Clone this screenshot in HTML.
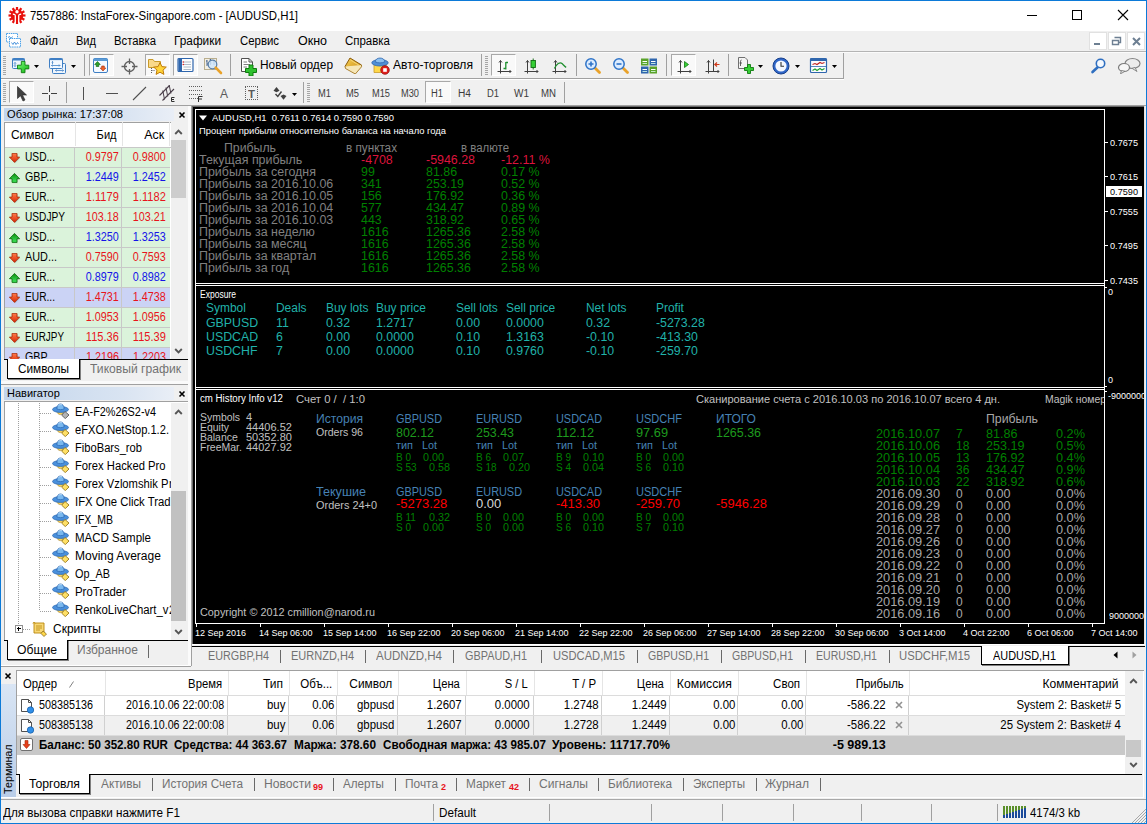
<!DOCTYPE html>
<html><head><meta charset="utf-8"><title>MT4</title><style>
html,body{margin:0;padding:0;width:1147px;height:824px;overflow:hidden;background:#f0f0f0}
body{position:relative;font-family:"Liberation Sans",sans-serif;font-size:12px;line-height:1}
div,span,svg{position:absolute;display:block}
span{white-space:pre;line-height:1}
</style></head><body>
<div style="left:0px;top:0px;width:1147px;height:31px;background:#fff;"></div>
<div style="left:0px;top:31px;width:1147px;height:793px;background:#f0f0f0;"></div>
<svg style="left:8px;top:7px" width="18" height="17" viewBox="0 0 18 17"><rect x="7.900" y="0" width="2.200" height="3.200" transform="rotate(0 9 8.500)" fill="#e8100c"/><rect x="7.900" y="0" width="2.200" height="3.200" transform="rotate(30 9 8.500)" fill="#e8100c"/><rect x="7.900" y="0" width="2.200" height="3.200" transform="rotate(60 9 8.500)" fill="#e8100c"/><rect x="7.900" y="0" width="2.200" height="3.200" transform="rotate(90 9 8.500)" fill="#e8100c"/><rect x="7.900" y="0" width="2.200" height="3.200" transform="rotate(120 9 8.500)" fill="#e8100c"/><rect x="7.900" y="0" width="2.200" height="3.200" transform="rotate(150 9 8.500)" fill="#e8100c"/><rect x="7.900" y="0" width="2.200" height="3.200" transform="rotate(180 9 8.500)" fill="#e8100c"/><rect x="7.900" y="0" width="2.200" height="3.200" transform="rotate(210 9 8.500)" fill="#e8100c"/><rect x="7.900" y="0" width="2.200" height="3.200" transform="rotate(240 9 8.500)" fill="#e8100c"/><rect x="7.900" y="0" width="2.200" height="3.200" transform="rotate(270 9 8.500)" fill="#e8100c"/><rect x="7.900" y="0" width="2.200" height="3.200" transform="rotate(300 9 8.500)" fill="#e8100c"/><rect x="7.900" y="0" width="2.200" height="3.200" transform="rotate(330 9 8.500)" fill="#e8100c"/><circle cx="9" cy="8.500" r="6.300" fill="#e8100c"/>
<circle cx="9" cy="4.700" r="1.700" fill="#fff"/>
<path d="M4.800 7.400C6.200 7 7.300 7.600 7.300 9V15.500M13.200 7.400C11.800 7 10.700 7.600 10.700 9V15.500" stroke="#fff" stroke-width="1.300" fill="none"/>
<rect x="8.100" y="13" width="1.800" height="4" fill="#e8100c"/></svg>
<span style="top:10px;font-size:12px;color:#000;left:30px;transform:scaleX(0.9521);transform-origin:0 0;">7557886: InstaForex-Singapore.com - [AUDUSD,H1]</span>
<div style="left:1027px;top:15px;width:10px;height:1px;background:#000;"></div>
<div style="left:1072px;top:10px;width:10px;height:10px;background:transparent;border:1px solid #000;box-sizing:border-box"></div>
<svg style="left:1117px;top:9px" width="12" height="12" viewBox="0 0 12 12"><path d="M1 1L11 11M11 1L1 11" stroke="#000" stroke-width="1.1" fill="none"/></svg>
<svg style="left:5px;top:32px" width="17" height="16" viewBox="0 0 17 16"><rect x="1.500" y="1.500" width="11" height="8.500" fill="#fff" stroke="#4aa0e8" stroke-dasharray="1.500 0.700"/><path d="M3 5.500L4.500 4.500L6 6.500L7.500 4.500" stroke="#3b8ad8" fill="none" stroke-width="0.900"/>
<rect x="4.500" y="6.500" width="11" height="8.500" fill="#fff" stroke="#4aa0e8" stroke-dasharray="1.500 0.700"/><path d="M6.500 10.500L8 12.500L9.500 10L11 12.500L12.500 10.500L13.500 12" stroke="#3b8ad8" fill="none" stroke-width="0.900"/></svg>
<span style="top:35px;font-size:12px;color:#000;left:30px;transform:scaleX(0.9487);transform-origin:0 0;">Файл</span>
<span style="top:35px;font-size:12px;color:#000;left:76px;transform:scaleX(0.9209);transform-origin:0 0;">Вид</span>
<span style="top:35px;font-size:12px;color:#000;left:114px;transform:scaleX(0.9415);transform-origin:0 0;">Вставка</span>
<span style="top:35px;font-size:12px;color:#000;left:174px;transform:scaleX(0.9853);transform-origin:0 0;">Графики</span>
<span style="top:35px;font-size:12px;color:#000;left:240px;transform:scaleX(0.9490);transform-origin:0 0;">Сервис</span>
<span style="top:35px;font-size:12px;color:#000;left:298px;transform:scaleX(1.0398);transform-origin:0 0;">Окно</span>
<span style="top:35px;font-size:12px;color:#000;left:345px;transform:scaleX(0.9559);transform-origin:0 0;">Справка</span>
<div style="left:1089px;top:32px;width:18px;height:18px;background:#fff;border:1px solid #e1e1e1;box-sizing:border-box"></div>
<div style="left:1108px;top:32px;width:18px;height:18px;background:#fff;border:1px solid #e1e1e1;box-sizing:border-box"></div>
<div style="left:1127px;top:32px;width:18px;height:18px;background:#fff;border:1px solid #e1e1e1;box-sizing:border-box"></div>
<div style="left:1094px;top:43px;width:6px;height:2px;background:#6d7f92;"></div>
<svg style="left:1111px;top:36px" width="11" height="10" viewBox="0 0 11 10"><path d="M3.5 1.5H9.5V6.5H8M1.5 4.5H7.5V8.5H1.5Z" stroke="#6d7f92" stroke-width="1.4" fill="none"/></svg>
<svg style="left:1132px;top:37px" width="9" height="9" viewBox="0 0 9 9"><path d="M1 1L8 8M8 1L1 8" stroke="#6d7f92" stroke-width="2" fill="none"/></svg>
<div style="left:1px;top:51px;width:1145px;height:1px;background:#b4b4b4;"></div>
<div style="left:1px;top:52px;width:1145px;height:1px;background:#fbfbfb;"></div>
<div style="left:1px;top:78px;width:843px;height:1px;background:#a0a0a0;"></div>
<div style="left:843px;top:53px;width:1px;height:26px;background:#a0a0a0;"></div>
<div style="left:1px;top:79px;width:843px;height:1px;background:#fff;"></div>
<div style="left:1px;top:105px;width:1145px;height:1px;background:#a0a0a0;"></div>
<div style="left:3px;top:56px;width:3px;height:1px;background:#a6a6a6;"></div>
<div style="left:3px;top:58px;width:3px;height:1px;background:#a6a6a6;"></div>
<div style="left:3px;top:60px;width:3px;height:1px;background:#a6a6a6;"></div>
<div style="left:3px;top:62px;width:3px;height:1px;background:#a6a6a6;"></div>
<div style="left:3px;top:64px;width:3px;height:1px;background:#a6a6a6;"></div>
<div style="left:3px;top:66px;width:3px;height:1px;background:#a6a6a6;"></div>
<div style="left:3px;top:68px;width:3px;height:1px;background:#a6a6a6;"></div>
<div style="left:3px;top:70px;width:3px;height:1px;background:#a6a6a6;"></div>
<div style="left:3px;top:72px;width:3px;height:1px;background:#a6a6a6;"></div>
<div style="left:3px;top:74px;width:3px;height:1px;background:#a6a6a6;"></div>
<div style="left:485px;top:56px;width:3px;height:1px;background:#a6a6a6;"></div>
<div style="left:485px;top:58px;width:3px;height:1px;background:#a6a6a6;"></div>
<div style="left:485px;top:60px;width:3px;height:1px;background:#a6a6a6;"></div>
<div style="left:485px;top:62px;width:3px;height:1px;background:#a6a6a6;"></div>
<div style="left:485px;top:64px;width:3px;height:1px;background:#a6a6a6;"></div>
<div style="left:485px;top:66px;width:3px;height:1px;background:#a6a6a6;"></div>
<div style="left:485px;top:68px;width:3px;height:1px;background:#a6a6a6;"></div>
<div style="left:485px;top:70px;width:3px;height:1px;background:#a6a6a6;"></div>
<div style="left:485px;top:72px;width:3px;height:1px;background:#a6a6a6;"></div>
<div style="left:485px;top:74px;width:3px;height:1px;background:#a6a6a6;"></div>
<div style="left:3px;top:83px;width:3px;height:1px;background:#a6a6a6;"></div>
<div style="left:3px;top:85px;width:3px;height:1px;background:#a6a6a6;"></div>
<div style="left:3px;top:87px;width:3px;height:1px;background:#a6a6a6;"></div>
<div style="left:3px;top:89px;width:3px;height:1px;background:#a6a6a6;"></div>
<div style="left:3px;top:91px;width:3px;height:1px;background:#a6a6a6;"></div>
<div style="left:3px;top:93px;width:3px;height:1px;background:#a6a6a6;"></div>
<div style="left:3px;top:95px;width:3px;height:1px;background:#a6a6a6;"></div>
<div style="left:3px;top:97px;width:3px;height:1px;background:#a6a6a6;"></div>
<div style="left:3px;top:99px;width:3px;height:1px;background:#a6a6a6;"></div>
<div style="left:3px;top:101px;width:3px;height:1px;background:#a6a6a6;"></div>
<div style="left:307px;top:83px;width:3px;height:1px;background:#a6a6a6;"></div>
<div style="left:307px;top:85px;width:3px;height:1px;background:#a6a6a6;"></div>
<div style="left:307px;top:87px;width:3px;height:1px;background:#a6a6a6;"></div>
<div style="left:307px;top:89px;width:3px;height:1px;background:#a6a6a6;"></div>
<div style="left:307px;top:91px;width:3px;height:1px;background:#a6a6a6;"></div>
<div style="left:307px;top:93px;width:3px;height:1px;background:#a6a6a6;"></div>
<div style="left:307px;top:95px;width:3px;height:1px;background:#a6a6a6;"></div>
<div style="left:307px;top:97px;width:3px;height:1px;background:#a6a6a6;"></div>
<div style="left:307px;top:99px;width:3px;height:1px;background:#a6a6a6;"></div>
<div style="left:307px;top:101px;width:3px;height:1px;background:#a6a6a6;"></div>
<div style="left:84px;top:54px;width:1px;height:22px;background:#a0a0a0;"></div>
<div style="left:230px;top:54px;width:1px;height:22px;background:#a0a0a0;"></div>
<div style="left:481px;top:54px;width:1px;height:22px;background:#a0a0a0;"></div>
<div style="left:576px;top:54px;width:1px;height:22px;background:#a0a0a0;"></div>
<div style="left:666px;top:54px;width:1px;height:22px;background:#a0a0a0;"></div>
<div style="left:728px;top:54px;width:1px;height:22px;background:#a0a0a0;"></div>
<div style="left:66px;top:82px;width:1px;height:21px;background:#a0a0a0;"></div>
<div style="left:303px;top:82px;width:1px;height:21px;background:#a0a0a0;"></div>
<div style="left:564px;top:82px;width:1px;height:21px;background:#a0a0a0;"></div>
<div style="left:89px;top:54px;width:25px;height:22px;background:#f9f9f9;border:1px solid #fff;border-top-color:#a8a8a8;border-left-color:#a8a8a8;box-sizing:border-box"></div>
<div style="left:145px;top:54px;width:25px;height:22px;background:#f9f9f9;border:1px solid #fff;border-top-color:#a8a8a8;border-left-color:#a8a8a8;box-sizing:border-box"></div>
<div style="left:173px;top:54px;width:25px;height:22px;background:#f9f9f9;border:1px solid #fff;border-top-color:#a8a8a8;border-left-color:#a8a8a8;box-sizing:border-box"></div>
<div style="left:491px;top:54px;width:25px;height:22px;background:#f9f9f9;border:1px solid #fff;border-top-color:#a8a8a8;border-left-color:#a8a8a8;box-sizing:border-box"></div>
<div style="left:671px;top:54px;width:25px;height:22px;background:#f9f9f9;border:1px solid #fff;border-top-color:#a8a8a8;border-left-color:#a8a8a8;box-sizing:border-box"></div>
<div style="left:9px;top:81px;width:25px;height:22px;background:#f9f9f9;border:1px solid #fff;border-top-color:#a8a8a8;border-left-color:#a8a8a8;box-sizing:border-box"></div>
<div style="left:425px;top:81px;width:26px;height:22px;background:#f9f9f9;border:1px solid #fff;border-top-color:#a8a8a8;border-left-color:#a8a8a8;box-sizing:border-box"></div>
<span style="top:59px;font-size:12px;color:#000;left:260px;transform:scaleX(0.9890);transform-origin:0 0;">Новый ордер</span>
<span style="top:59px;font-size:12px;color:#000;left:393px;transform:scaleX(1.0095);transform-origin:0 0;">Авто-торговля</span>
<span style="top:89px;font-size:10px;color:#3c3c3c;left:318px;transform:scaleX(0.9348);transform-origin:0 0;">M1</span>
<span style="top:89px;font-size:10px;color:#3c3c3c;left:346px;transform:scaleX(0.9348);transform-origin:0 0;">M5</span>
<span style="top:89px;font-size:10px;color:#3c3c3c;left:372px;transform:scaleX(0.9253);transform-origin:0 0;">M15</span>
<span style="top:89px;font-size:10px;color:#3c3c3c;left:401px;transform:scaleX(0.9253);transform-origin:0 0;">M30</span>
<span style="top:89px;font-size:10px;color:#3c3c3c;left:431px;transform:scaleX(0.9377);transform-origin:0 0;">H1</span>
<span style="top:89px;font-size:10px;color:#3c3c3c;left:458px;transform:scaleX(1.0159);transform-origin:0 0;">H4</span>
<span style="top:89px;font-size:10px;color:#3c3c3c;left:487px;transform:scaleX(0.9377);transform-origin:0 0;">D1</span>
<span style="top:89px;font-size:10px;color:#3c3c3c;left:514px;">W1</span>
<span style="top:89px;font-size:10px;color:#3c3c3c;left:541px;transform:scaleX(0.9639);transform-origin:0 0;">MN</span>
<svg style="left:11px;top:57px" width="19" height="18" viewBox="0 0 19 18"><rect x="1.5" y="1.5" width="12" height="10" rx="1" fill="#eef5fc" stroke="#3f7fc4"/><rect x="1.5" y="1.5" width="12" height="2" fill="#3f7fc4"/>
<path d="M4 5.5V9.5M3 6.5L4 5.5L5 6.5M3 8.5L4 9.5L5 8.5" stroke="#3f7fc4" fill="none" stroke-width="0.8"/>
<defs><linearGradient id="gp" x1="0" y1="0" x2="1" y2="1"><stop offset="0" stop-color="#7aff7a"/><stop offset="1" stop-color="#10b010"/></linearGradient></defs><path d="M10.300 4.400H14V8.200H17.800V11.900H14V15.700H10.300V11.900H6.500V8.200H10.300Z" fill="url(#gp)" stroke="#0f7a0f" stroke-width="0.900"/></svg>
<svg style="left:34px;top:65px" width="5" height="3" viewBox="0 0 5 3"><path d="M0 0H5L2.5 3Z" fill="#000"/></svg>
<svg style="left:48px;top:57px" width="19" height="18" viewBox="0 0 19 18"><rect x="4.500" y="6.500" width="13" height="10" rx="1" fill="#eef5fc" stroke="#3f7fc4"/>
<path d="M7.500 13.500H15.500M8.500 12.500L7.500 13.500L8.500 14.500M14.500 12.500L15.500 13.500L14.500 14.500" stroke="#3f7fc4" fill="none" stroke-width="0.800"/>
<rect x="1.500" y="1.500" width="13" height="10" rx="1" fill="#f4f9ff" stroke="#3f7fc4"/><rect x="1.500" y="1.500" width="13" height="1.600" fill="#3f7fc4"/>
<path d="M3.500 8.500H12M4.500 7.500L3.500 8.500L4.500 9.500M11 7.500L12 8.500L11 9.500M4.500 4.500V7M3.700 5.300L4.500 4.500L5.300 5.300" stroke="#3f7fc4" fill="none" stroke-width="0.800"/></svg>
<svg style="left:71px;top:65px" width="5" height="3" viewBox="0 0 5 3"><path d="M0 0H5L2.5 3Z" fill="#000"/></svg>
<svg style="left:92px;top:57px" width="17" height="17" viewBox="0 0 17 17"><rect x="1.5" y="1.5" width="14" height="14" rx="1.5" fill="#f4f9ff" stroke="#3f7fc4"/><rect x="1.5" y="1.5" width="14" height="2.5" fill="#5b9bd5"/>
<path d="M5.500 4.500L8.300 7.500H6.800V9.500H4.200V7.500H2.700Z" fill="#2aa02a" stroke="#0b5e0b" stroke-width="0.600"/><path d="M11 14L13.800 11H12.300V9H9.700V11H8.200Z" fill="#f0642a" stroke="#a02808" stroke-width="0.600"/></svg>
<svg style="left:121px;top:58px" width="17" height="17" viewBox="0 0 17 17"><circle cx="8.5" cy="8.5" r="5" fill="none" stroke="#606060" stroke-width="1.3"/><path d="M8.5 0.5V6M8.5 11V16.5M0.5 8.5H6M11 8.5H16.5" stroke="#606060" stroke-width="1.3"/></svg>
<svg style="left:147px;top:56px" width="20" height="19" viewBox="0 0 20 19"><path d="M1.5 3.5H6L7.5 5.5H13.5V11.5H1.5Z" fill="#f9d98a" stroke="#c89a2a"/><path d="M4.5 12V17" stroke="#606060" stroke-dasharray="1 1"/><path d="M4.5 14.5H8" stroke="#606060" stroke-dasharray="1 1"/>
<path d="M13 6.5L14.9 10.6L19.3 11.1L16 14.1L16.9 18.4L13 16.2L9.1 18.4L10 14.1L6.7 11.1L11.1 10.6Z" fill="#ffd43a" stroke="#c07c0a" stroke-width="1"/></svg>
<svg style="left:177px;top:57px" width="17" height="16" viewBox="0 0 17 16"><rect x="1" y="1.5" width="15" height="13" rx="1" fill="#fdfdfd" stroke="#2f66ad" stroke-width="1.2"/><rect x="1.5" y="2" width="3.5" height="12" fill="#2f66ad"/>
<path d="M6.5 5H14M6.5 7.5H14M6.5 10H14M6.5 12.5H14" stroke="#9ab" stroke-width="0.8"/><circle cx="6.3" cy="5" r="0.8" fill="#d22"/><circle cx="6.3" cy="7.5" r="0.8" fill="#d22"/></svg>
<svg style="left:203px;top:56px" width="20" height="20" viewBox="0 0 20 20"><rect x="1.5" y="2.5" width="12" height="11" fill="#f3efe3" stroke="#b9ae8e"/><path d="M4 4V10M3 5H4M4 8H5M7.5 3V9M6.5 4H7.5M7.5 7H8.5M11 4V9M10 5H11" stroke="#3a5a8a" stroke-width="0.9" fill="none"/>
<circle cx="9.5" cy="8.5" r="4.3" fill="#cfe6fb" fill-opacity="0.85" stroke="#5a7fa8" stroke-width="1.2"/><path d="M12.7 11.7L18 17" stroke="#e9a22a" stroke-width="2.6" stroke-linecap="round"/></svg>
<svg style="left:239px;top:57px" width="19" height="19" viewBox="0 0 19 19"><path d="M2.5 1.5H10L13.5 5V14.5H2.5Z" fill="#fff" stroke="#505050"/><path d="M10 1.5V5H13.5" fill="none" stroke="#505050"/><path d="M4.5 5H8M4.5 7.5H11M4.5 10H8" stroke="#707070" stroke-width="0.9"/>
<path d="M10 8H14V11.500H17.5V15.500H14V19H10V15.500H6.500V11.500H10Z" fill="#2fc12f" stroke="#0f7a0f" stroke-width="1"/></svg>
<svg style="left:344px;top:57px" width="19" height="17" viewBox="0 0 19 17"><defs><linearGradient id="bk" x1="0" y1="0" x2="1" y2="1"><stop offset="0" stop-color="#f7d25a"/><stop offset="1" stop-color="#c8860a"/></linearGradient></defs><path d="M6 1L17.500 8L11 15.500L1 9.500Z" fill="url(#bk)" stroke="#8a5a0a" stroke-width="1"/><path d="M1 9.500L1.5 11.500L11.300 17L17.5 9.800V8" fill="#f6e7b8" stroke="#9a6a0a" stroke-width="0.8"/><path d="M6.5 3L15 8.200" stroke="#f7d774" stroke-width="1"/></svg>
<svg style="left:371px;top:56px" width="19" height="19" viewBox="0 0 19 19"><path d="M3 8H15V16.500H3Z" fill="#ffd84a" stroke="#c89a2a" stroke-width="0.8"/><ellipse cx="9" cy="6.800" rx="8.200" ry="3.200" fill="#4f8fd6" stroke="#2f66ad" stroke-width="0.8"/><path d="M4.200 5.800C4.200 0.800 13.800 0.800 13.800 5.800C11 7.300 7 7.300 4.200 5.800Z" fill="#8cc0f0" stroke="#2f66ad" stroke-width="0.8"/>
<circle cx="14" cy="14" r="4.300" fill="#e0201c" stroke="#8a0a0a" stroke-width="0.7"/><rect x="12.200" y="12.200" width="3.600" height="3.600" fill="#fff"/></svg>
<svg style="left:495px;top:57px" width="18" height="18" viewBox="0 0 18 18"><path d="M5.500 3.500V16.500M2.500 14.500H16M4 5.500L5.500 3.500L7 5.500M14.500 13L16 14.500L14.500 16" stroke="#404040" stroke-width="1" fill="none"/><path d="M10.800 5V12.500M10.800 5.500H13M10.800 11.500H8.500" stroke="#1f8f2f" stroke-width="1.300" fill="none"/></svg>
<svg style="left:522px;top:57px" width="18" height="18" viewBox="0 0 18 18"><path d="M5.500 3.500V16.500M2.500 14.500H16M4 5.500L5.500 3.500L7 5.500M14.500 13L16 14.500L14.500 16" stroke="#404040" stroke-width="1" fill="none"/><path d="M11.200 1.500V12.500" stroke="#1f6f1f" stroke-width="1"/><rect x="9" y="3.500" width="4.400" height="7" fill="#35cf35" stroke="#0f6a0f" stroke-width="0.900"/></svg>
<svg style="left:550px;top:57px" width="18" height="18" viewBox="0 0 18 18"><path d="M5.500 3.500V16.500M2.500 14.500H16M4 5.500L5.500 3.500L7 5.500M14.500 13L16 14.500L14.500 16" stroke="#404040" stroke-width="1" fill="none"/><path d="M4.400 11.500C6.500 7 10 4.500 12 6.500C13.500 8 14.500 9.500 16.200 10.400" stroke="#1f8f2f" stroke-width="1.200" fill="none"/></svg>
<svg style="left:584px;top:57px" width="18" height="18" viewBox="0 0 18 18"><path d="M10.500 10.500L15.500 15.500" stroke="#e9a22a" stroke-width="2.800" stroke-linecap="round"/><circle cx="7" cy="7" r="5.200" fill="#dcecff" stroke="#2f74c8" stroke-width="1.500"/><path d="M4.500 7H9.500M7 4.500V9.500" stroke="#2f74c8" stroke-width="1.600"/></svg>
<svg style="left:612px;top:57px" width="18" height="18" viewBox="0 0 18 18"><path d="M10.500 10.500L15.500 15.500" stroke="#e9a22a" stroke-width="2.800" stroke-linecap="round"/><circle cx="7" cy="7" r="5.200" fill="#dcecff" stroke="#2f74c8" stroke-width="1.500"/><path d="M4.500 7H9.500" stroke="#2f74c8" stroke-width="1.600"/></svg>
<svg style="left:640px;top:57px" width="18" height="18" viewBox="0 0 18 18"><rect x="1" y="1.500" width="7.500" height="7" fill="#5aa22a"/><rect x="9.500" y="1.500" width="7.500" height="7" fill="#2f66ad"/><rect x="1" y="9.500" width="7.500" height="7" fill="#2f66ad"/><rect x="9.500" y="9.500" width="7.500" height="7" fill="#5aa22a"/>
<path d="M2.500 4.500H7M11 4.500H15.500M2.500 12.500H7M11 12.500H15.500" stroke="#fff" stroke-width="1"/><path d="M2.500 6.500H7M11 6.500H15.500M2.500 14.500H7M11 14.500H15.500" stroke="#dfe" stroke-width="0.8"/></svg>
<svg style="left:675px;top:57px" width="18" height="18" viewBox="0 0 18 18"><path d="M5.500 3.500V16.500M2.500 14.500H16M4 5.500L5.500 3.500L7 5.500M14.500 13L16 14.500L14.500 16" stroke="#404040" stroke-width="1" fill="none"/><path d="M9.500 4.500L13.500 7.500L9.500 10.500Z" fill="#35cf35" stroke="#0f7a0f" stroke-width="0.800"/></svg>
<svg style="left:703px;top:57px" width="18" height="18" viewBox="0 0 18 18"><path d="M5.500 3.500V16.500M2.500 14.500H16M4 5.500L5.500 3.500L7 5.500M14.500 13L16 14.500L14.500 16" stroke="#404040" stroke-width="1" fill="none"/><path d="M10.500 2.500V14" stroke="#404040" stroke-width="1"/><path d="M16.500 7.500H12M14 5.500L11.800 7.500L14 9.500" stroke="#d03a1a" stroke-width="1.200" fill="none"/></svg>
<svg style="left:737px;top:56px" width="19" height="19" viewBox="0 0 19 19"><path d="M1.500 1.500H8L10.500 4V12.500H1.500Z" fill="#f4f4f4" stroke="#707070"/><path d="M4.500 4C3.500 4 3.500 5 3.500 6V10M2.500 7H5" stroke="#505050" stroke-width="0.9" fill="none"/>
<path d="M10.500 8.500H13.500V11.500H16.500V14.500H13.500V17.500H10.500V14.500H7.500V11.500H10.500Z" fill="#35cf35" stroke="#0f7a0f" stroke-width="0.900"/></svg>
<svg style="left:758px;top:65px" width="5" height="3" viewBox="0 0 5 3"><path d="M0 0H5L2.5 3Z" fill="#000"/></svg>
<svg style="left:772px;top:57px" width="18" height="18" viewBox="0 0 18 18"><circle cx="9" cy="9" r="8" fill="#2f66c8" stroke="#173f8a" stroke-width="1"/><circle cx="9" cy="9" r="5.600" fill="#f4f8ff"/><path d="M9 5V9.300H12" stroke="#333" stroke-width="1.100" fill="none"/></svg>
<svg style="left:795px;top:65px" width="5" height="3" viewBox="0 0 5 3"><path d="M0 0H5L2.5 3Z" fill="#000"/></svg>
<svg style="left:809px;top:57px" width="19" height="17" viewBox="0 0 19 17"><rect x="1.500" y="1.500" width="16" height="14" rx="1" fill="#fbfdff" stroke="#2f66ad" stroke-width="1.200"/><rect x="1.500" y="1.500" width="16" height="2.500" fill="#2f66ad"/><path d="M2 9.500H17" stroke="#2f66ad" stroke-width="0.800"/>
<path d="M3.500 7.500L6 6.500L8 7.500L11 5.500L13 6.500L15.500 5.500" stroke="#c0201c" stroke-width="1.100" fill="none"/><path d="M3.500 13.500L6 12L8 13.500L11 11.500L13 13L15.500 11.500" stroke="#1f9f2f" stroke-width="1.100" fill="none"/></svg>
<svg style="left:832px;top:65px" width="5" height="3" viewBox="0 0 5 3"><path d="M0 0H5L2.5 3Z" fill="#000"/></svg>
<svg style="left:1090px;top:58px" width="16" height="16" viewBox="0 0 16 16"><path d="M8.500 8.500L2.500 14" stroke="#2f6fc0" stroke-width="2.600" stroke-linecap="round"/><circle cx="10.500" cy="5.500" r="4.200" fill="#f4f9ff" stroke="#2f6fc0" stroke-width="1.600"/></svg>
<svg style="left:1117px;top:57px" width="25" height="17" viewBox="0 0 25 17"><ellipse cx="15.500" cy="6.500" rx="7.500" ry="5" fill="#ececec" stroke="#858585" stroke-width="1.200"/><path d="M18 10.500L20 14.500L15 11.300Z" fill="#ececec" stroke="#858585" stroke-width="0.900"/>
<ellipse cx="7" cy="10.500" rx="5.500" ry="4" fill="#f6f6f6" stroke="#7a7a7a" stroke-width="1.200"/><path d="M4.500 13.500L3.500 16.800L8 14.300Z" fill="#f6f6f6" stroke="#7a7a7a" stroke-width="0.900"/></svg>
<svg style="left:16px;top:86px" width="12" height="16" viewBox="0 0 12 16"><path d="M1.500 0.500V12.500L4.500 9.800L7 15L9 14L6.500 9H10.500Z" fill="#404040" stroke="#202020" stroke-width="0.600"/></svg>
<svg style="left:42px;top:86px" width="15" height="15" viewBox="0 0 15 15"><path d="M7.500 0V6M7.500 9V15M0 7.500H6M9 7.500H15" stroke="#404040" stroke-width="1"/></svg>
<div style="left:83px;top:87px;width:1px;height:13px;background:#505050;"></div>
<div style="left:106px;top:93px;width:12px;height:1px;background:#505050;"></div>
<svg style="left:132px;top:86px" width="15" height="15" viewBox="0 0 15 15"><path d="M1 14L14 1" stroke="#505050" stroke-width="1.100"/></svg>
<svg style="left:158px;top:85px" width="20" height="18" viewBox="0 0 20 18"><path d="M1.500 10.500L11.500 0.500M4.500 15.500L16 4" stroke="#4a3f4a" stroke-width="1.100" fill="none"/><path d="M4.800 5.500L6.500 14.500M8 2.500L9.700 11.500M11.200 0L12.900 8.500" stroke="#4a3f4a" stroke-width="1" fill="none"/><path d="M16.500 12.500H13.500V16.500H16.500M13.500 14.500H16" stroke="#303030" stroke-width="1" fill="none"/></svg>
<div style="left:189px;top:86px;width:14px;height:1px;background:repeating-linear-gradient(90deg,#606060 0 1px,transparent 1px 2px);"></div>
<div style="left:189px;top:90px;width:14px;height:1px;background:repeating-linear-gradient(90deg,#606060 0 1px,transparent 1px 2px);"></div>
<div style="left:189px;top:94px;width:14px;height:1px;background:repeating-linear-gradient(90deg,#606060 0 1px,transparent 1px 2px);"></div>
<div style="left:189px;top:98px;width:9px;height:1px;background:repeating-linear-gradient(90deg,#606060 0 1px,transparent 1px 2px);"></div>
<svg style="left:198px;top:96px" width="5" height="6" viewBox="0 0 5 6"><path d="M0.500 6V0.500H4.500M0.500 3H4" stroke="#303030" stroke-width="1" fill="none"/></svg>
<span style="top:88px;font-size:12px;color:#5a5a5a;left:220px;">A</span>
<div style="left:245px;top:86px;width:13px;height:14px;background:transparent;border:1px dotted #606060;box-sizing:border-box"></div>
<span style="top:89px;font-size:11px;color:#5a5a5a;font-weight:bold;left:248px;transform:scaleX(1.0394);transform-origin:0 0;">T</span>
<svg style="left:271px;top:86px" width="18" height="15" viewBox="0 0 18 15"><path d="M2.500 4.700L5.500 1L8.500 4.700L5.500 6.200Z" fill="#404040"/><path d="M9.500 10L12.500 13.700L15.500 10L12.500 8.500Z" fill="#404040"/><path d="M4.500 8L6.800 10.500L10.500 5.500" stroke="#404040" stroke-width="1.400" fill="none"/></svg>
<svg style="left:292px;top:93px" width="5" height="3" viewBox="0 0 5 3"><path d="M0 0H5L2.5 3Z" fill="#000"/></svg>
<div style="left:1px;top:106px;width:187px;height:561px;background:#f0f0f0;"></div>
<div style="left:4px;top:108px;width:170px;height:13px;background:linear-gradient(90deg,#c2d5ec 0%,#d9e4f2 70%,#e9eef6 100%);"></div>
<span style="top:109px;font-size:11px;color:#000;left:7px;transform:scaleX(1.0084);transform-origin:0 0;">Обзор рынка: 17:37:08</span>
<svg style="left:178px;top:111px" width="8" height="8" viewBox="0 0 8 8"><path d="M1.5 1.5L6.5 6.5M6.5 1.5L1.5 6.5" stroke="#000" stroke-width="1.6"/></svg>
<div style="left:4px;top:123px;width:184px;height:236px;background:#fff;"></div>
<div style="left:4px;top:122px;width:1px;height:237px;background:#a0a0a0;"></div>
<div style="left:4px;top:122px;width:184px;height:1px;background:#a0a0a0;"></div>
<span style="top:129px;font-size:12px;color:#000;left:11px;transform:scaleX(0.9935);transform-origin:0 0;">Символ</span>
<span style="top:129px;font-size:12px;color:#000;right:1030px;transform:scaleX(0.9262);transform-origin:100% 0;">Бид</span>
<span style="top:129px;font-size:12px;color:#000;right:983px;transform:scaleX(1.0381);transform-origin:100% 0;">Аск</span>
<div style="left:75px;top:122px;width:1px;height:24px;background:#e5e5e5;"></div>
<div style="left:122px;top:122px;width:1px;height:24px;background:#e5e5e5;"></div>
<div style="left:169px;top:122px;width:1px;height:24px;background:#e5e5e5;"></div>
<div style="left:5px;top:147px;width:166px;height:212px;overflow:hidden">
<div style="left:0px;top:0px;width:166px;height:20px;background:#dbf3db;"></div>
<div style="left:0px;top:20px;width:166px;height:20px;background:#dbf3db;"></div>
<div style="left:0px;top:40px;width:166px;height:20px;background:#dbf3db;"></div>
<div style="left:0px;top:60px;width:166px;height:20px;background:#dbf3db;"></div>
<div style="left:0px;top:80px;width:166px;height:20px;background:#dbf3db;"></div>
<div style="left:0px;top:100px;width:166px;height:20px;background:#dbf3db;"></div>
<div style="left:0px;top:120px;width:166px;height:20px;background:#dbf3db;"></div>
<div style="left:0px;top:140px;width:166px;height:20px;background:#cbd3f5;"></div>
<div style="left:0px;top:160px;width:166px;height:20px;background:#dbf3db;"></div>
<div style="left:0px;top:180px;width:166px;height:20px;background:#dbf3db;"></div>
<div style="left:0px;top:200px;width:166px;height:20px;background:#cbd3f5;"></div>
<div style="left:0px;top:20px;width:166px;height:1px;background:#c8c8c8;"></div>
<div style="left:0px;top:40px;width:166px;height:1px;background:#c8c8c8;"></div>
<div style="left:0px;top:60px;width:166px;height:1px;background:#c8c8c8;"></div>
<div style="left:0px;top:80px;width:166px;height:1px;background:#c8c8c8;"></div>
<div style="left:0px;top:100px;width:166px;height:1px;background:#c8c8c8;"></div>
<div style="left:0px;top:120px;width:166px;height:1px;background:#c8c8c8;"></div>
<div style="left:0px;top:140px;width:166px;height:1px;background:#c8c8c8;"></div>
<div style="left:0px;top:160px;width:166px;height:1px;background:#c8c8c8;"></div>
<div style="left:0px;top:180px;width:166px;height:1px;background:#c8c8c8;"></div>
<div style="left:0px;top:200px;width:166px;height:1px;background:#c8c8c8;"></div>
<div style="left:0px;top:220px;width:166px;height:1px;background:#c8c8c8;"></div>
<div style="left:69px;top:0px;width:1px;height:212px;background:#c8c8c8;"></div>
<div style="left:116px;top:0px;width:1px;height:212px;background:#c8c8c8;"></div>
<div style="left:165px;top:0px;width:1px;height:212px;background:#fff;"></div>
<div style="left:0px;top:0px;width:166px;height:1px;background:#c8c8c8;"></div>
</div>
<svg style="left:9px;top:153px" width="12" height="11" viewBox="0 0 12 11"><defs><linearGradient id="gd" x1="0" y1="0" x2="0" y2="1"><stop offset="0" stop-color="#ff7a4a"/><stop offset="1" stop-color="#d82a08"/></linearGradient></defs><path d="M5.500 9.400L10.600 4.100H8V0.400H3V4.100H0.400Z" fill="#888" opacity="0.350" transform="translate(0.800 0.800)"/><path d="M5.500 9.400L10.600 4.100H8V0.400H3V4.100H0.400Z" fill="url(#gd)" stroke="#a82808" stroke-width="0.800"/></svg>
<span style="top:151px;font-size:12px;color:#000;left:25px;transform:scaleX(0.8488);transform-origin:0 0;">USD...</span>
<span style="top:151px;font-size:12px;color:#e8141c;right:1028px;transform:scaleX(0.8991);transform-origin:100% 0;">0.9797</span>
<span style="top:151px;font-size:12px;color:#e8141c;right:981px;transform:scaleX(0.8991);transform-origin:100% 0;">0.9800</span>
<svg style="left:9px;top:173px" width="12" height="11" viewBox="0 0 12 11"><defs><linearGradient id="gu" x1="0" y1="0" x2="0" y2="1"><stop offset="0" stop-color="#0c8a0c"/><stop offset="1" stop-color="#3fe85f"/></linearGradient></defs><path d="M5.500 0.400L10.600 5.700H8V9.400H3V5.700H0.400Z" fill="#888" opacity="0.350" transform="translate(0.800 0.800)"/><path d="M5.500 0.400L10.600 5.700H8V9.400H3V5.700H0.400Z" fill="url(#gu)" stroke="#0a6a0a" stroke-width="0.800"/></svg>
<span style="top:171px;font-size:12px;color:#000;left:25px;transform:scaleX(0.8877);transform-origin:0 0;">GBP...</span>
<span style="top:171px;font-size:12px;color:#1414e8;right:1028px;transform:scaleX(0.8991);transform-origin:100% 0;">1.2449</span>
<span style="top:171px;font-size:12px;color:#1414e8;right:981px;transform:scaleX(0.8991);transform-origin:100% 0;">1.2452</span>
<svg style="left:9px;top:193px" width="12" height="11" viewBox="0 0 12 11"><defs><linearGradient id="gd" x1="0" y1="0" x2="0" y2="1"><stop offset="0" stop-color="#ff7a4a"/><stop offset="1" stop-color="#d82a08"/></linearGradient></defs><path d="M5.500 9.400L10.600 4.100H8V0.400H3V4.100H0.400Z" fill="#888" opacity="0.350" transform="translate(0.800 0.800)"/><path d="M5.500 9.400L10.600 4.100H8V0.400H3V4.100H0.400Z" fill="url(#gd)" stroke="#a82808" stroke-width="0.800"/></svg>
<span style="top:191px;font-size:12px;color:#000;left:25px;transform:scaleX(0.8488);transform-origin:0 0;">EUR...</span>
<span style="top:191px;font-size:12px;color:#e8141c;right:1028px;transform:scaleX(0.9215);transform-origin:100% 0;">1.1179</span>
<span style="top:191px;font-size:12px;color:#e8141c;right:981px;transform:scaleX(0.9215);transform-origin:100% 0;">1.1182</span>
<svg style="left:9px;top:213px" width="12" height="11" viewBox="0 0 12 11"><defs><linearGradient id="gd" x1="0" y1="0" x2="0" y2="1"><stop offset="0" stop-color="#ff7a4a"/><stop offset="1" stop-color="#d82a08"/></linearGradient></defs><path d="M5.500 9.400L10.600 4.100H8V0.400H3V4.100H0.400Z" fill="#888" opacity="0.350" transform="translate(0.800 0.800)"/><path d="M5.500 9.400L10.600 4.100H8V0.400H3V4.100H0.400Z" fill="url(#gd)" stroke="#a82808" stroke-width="0.800"/></svg>
<span style="top:211px;font-size:12px;color:#000;left:25px;transform:scaleX(0.8449);transform-origin:0 0;">USDJPY</span>
<span style="top:211px;font-size:12px;color:#e8141c;right:1028px;transform:scaleX(0.8991);transform-origin:100% 0;">103.18</span>
<span style="top:211px;font-size:12px;color:#e8141c;right:981px;transform:scaleX(0.8991);transform-origin:100% 0;">103.21</span>
<svg style="left:9px;top:233px" width="12" height="11" viewBox="0 0 12 11"><defs><linearGradient id="gu" x1="0" y1="0" x2="0" y2="1"><stop offset="0" stop-color="#0c8a0c"/><stop offset="1" stop-color="#3fe85f"/></linearGradient></defs><path d="M5.500 0.400L10.600 5.700H8V9.400H3V5.700H0.400Z" fill="#888" opacity="0.350" transform="translate(0.800 0.800)"/><path d="M5.500 0.400L10.600 5.700H8V9.400H3V5.700H0.400Z" fill="url(#gu)" stroke="#0a6a0a" stroke-width="0.800"/></svg>
<span style="top:231px;font-size:12px;color:#000;left:25px;transform:scaleX(0.8488);transform-origin:0 0;">USD...</span>
<span style="top:231px;font-size:12px;color:#1414e8;right:1028px;transform:scaleX(0.8991);transform-origin:100% 0;">1.3250</span>
<span style="top:231px;font-size:12px;color:#1414e8;right:981px;transform:scaleX(0.8991);transform-origin:100% 0;">1.3253</span>
<svg style="left:9px;top:253px" width="12" height="11" viewBox="0 0 12 11"><defs><linearGradient id="gd" x1="0" y1="0" x2="0" y2="1"><stop offset="0" stop-color="#ff7a4a"/><stop offset="1" stop-color="#d82a08"/></linearGradient></defs><path d="M5.500 9.400L10.600 4.100H8V0.400H3V4.100H0.400Z" fill="#888" opacity="0.350" transform="translate(0.800 0.800)"/><path d="M5.500 9.400L10.600 4.100H8V0.400H3V4.100H0.400Z" fill="url(#gd)" stroke="#a82808" stroke-width="0.800"/></svg>
<span style="top:251px;font-size:12px;color:#000;left:25px;transform:scaleX(0.9054);transform-origin:0 0;">AUD...</span>
<span style="top:251px;font-size:12px;color:#e8141c;right:1028px;transform:scaleX(0.8991);transform-origin:100% 0;">0.7590</span>
<span style="top:251px;font-size:12px;color:#e8141c;right:981px;transform:scaleX(0.8991);transform-origin:100% 0;">0.7593</span>
<svg style="left:9px;top:273px" width="12" height="11" viewBox="0 0 12 11"><defs><linearGradient id="gu" x1="0" y1="0" x2="0" y2="1"><stop offset="0" stop-color="#0c8a0c"/><stop offset="1" stop-color="#3fe85f"/></linearGradient></defs><path d="M5.500 0.400L10.600 5.700H8V9.400H3V5.700H0.400Z" fill="#888" opacity="0.350" transform="translate(0.800 0.800)"/><path d="M5.500 0.400L10.600 5.700H8V9.400H3V5.700H0.400Z" fill="url(#gu)" stroke="#0a6a0a" stroke-width="0.800"/></svg>
<span style="top:271px;font-size:12px;color:#000;left:25px;transform:scaleX(0.8488);transform-origin:0 0;">EUR...</span>
<span style="top:271px;font-size:12px;color:#1414e8;right:1028px;transform:scaleX(0.8991);transform-origin:100% 0;">0.8979</span>
<span style="top:271px;font-size:12px;color:#1414e8;right:981px;transform:scaleX(0.8991);transform-origin:100% 0;">0.8982</span>
<svg style="left:9px;top:293px" width="12" height="11" viewBox="0 0 12 11"><defs><linearGradient id="gd" x1="0" y1="0" x2="0" y2="1"><stop offset="0" stop-color="#ff7a4a"/><stop offset="1" stop-color="#d82a08"/></linearGradient></defs><path d="M5.500 9.400L10.600 4.100H8V0.400H3V4.100H0.400Z" fill="#888" opacity="0.350" transform="translate(0.800 0.800)"/><path d="M5.500 9.400L10.600 4.100H8V0.400H3V4.100H0.400Z" fill="url(#gd)" stroke="#a82808" stroke-width="0.800"/></svg>
<span style="top:291px;font-size:12px;color:#000;left:25px;transform:scaleX(0.8488);transform-origin:0 0;">EUR...</span>
<span style="top:291px;font-size:12px;color:#e8141c;right:1028px;transform:scaleX(0.8991);transform-origin:100% 0;">1.4731</span>
<span style="top:291px;font-size:12px;color:#e8141c;right:981px;transform:scaleX(0.8991);transform-origin:100% 0;">1.4738</span>
<svg style="left:9px;top:313px" width="12" height="11" viewBox="0 0 12 11"><defs><linearGradient id="gd" x1="0" y1="0" x2="0" y2="1"><stop offset="0" stop-color="#ff7a4a"/><stop offset="1" stop-color="#d82a08"/></linearGradient></defs><path d="M5.500 9.400L10.600 4.100H8V0.400H3V4.100H0.400Z" fill="#888" opacity="0.350" transform="translate(0.800 0.800)"/><path d="M5.500 9.400L10.600 4.100H8V0.400H3V4.100H0.400Z" fill="url(#gd)" stroke="#a82808" stroke-width="0.800"/></svg>
<span style="top:311px;font-size:12px;color:#000;left:25px;transform:scaleX(0.8488);transform-origin:0 0;">EUR...</span>
<span style="top:311px;font-size:12px;color:#e8141c;right:1028px;transform:scaleX(0.8991);transform-origin:100% 0;">1.0953</span>
<span style="top:311px;font-size:12px;color:#e8141c;right:981px;transform:scaleX(0.8991);transform-origin:100% 0;">1.0956</span>
<svg style="left:9px;top:333px" width="12" height="11" viewBox="0 0 12 11"><defs><linearGradient id="gd" x1="0" y1="0" x2="0" y2="1"><stop offset="0" stop-color="#ff7a4a"/><stop offset="1" stop-color="#d82a08"/></linearGradient></defs><path d="M5.500 9.400L10.600 4.100H8V0.400H3V4.100H0.400Z" fill="#888" opacity="0.350" transform="translate(0.800 0.800)"/><path d="M5.500 9.400L10.600 4.100H8V0.400H3V4.100H0.400Z" fill="url(#gd)" stroke="#a82808" stroke-width="0.800"/></svg>
<span style="top:331px;font-size:12px;color:#000;left:25px;transform:scaleX(0.8238);transform-origin:0 0;">EURJPY</span>
<span style="top:331px;font-size:12px;color:#e8141c;right:1028px;transform:scaleX(0.9215);transform-origin:100% 0;">115.36</span>
<span style="top:331px;font-size:12px;color:#e8141c;right:981px;transform:scaleX(0.9215);transform-origin:100% 0;">115.39</span>
<div style="left:5px;top:347px;width:166px;height:12px;overflow:hidden">
<svg style="left:4px;top:6px" width="12" height="11" viewBox="0 0 12 11"><defs><linearGradient id="gd" x1="0" y1="0" x2="0" y2="1"><stop offset="0" stop-color="#ff7a4a"/><stop offset="1" stop-color="#d82a08"/></linearGradient></defs><path d="M5.500 9.400L10.600 4.100H8V0.400H3V4.100H0.400Z" fill="#888" opacity="0.350" transform="translate(0.800 0.800)"/><path d="M5.500 9.400L10.600 4.100H8V0.400H3V4.100H0.400Z" fill="url(#gd)" stroke="#a82808" stroke-width="0.800"/></svg>
<span style="top:4px;font-size:12px;color:#000;left:20px;transform:scaleX(0.8877);transform-origin:0 0;">GBP...</span>
<span style="left:81px;top:4px;font-size:12px;color:#e8141c;transform:scaleX(0.90);transform-origin:0 0">1.2196</span>
<span style="left:128px;top:4px;font-size:12px;color:#e8141c;transform:scaleX(0.90);transform-origin:0 0">1.2203</span>
</div>
<div style="left:171px;top:122px;width:17px;height:237px;background:#f0f0f0;"></div>
<svg style="left:173px;top:128px" width="11" height="8" viewBox="0 0 11 8"><path d="M2.200 6L5.500 2.700L8.800 6" stroke="#555" stroke-width="1.900" fill="none"/></svg>
<svg style="left:173px;top:347px" width="11" height="8" viewBox="0 0 11 8"><path d="M2.200 2L5.500 5.300L8.800 2" stroke="#555" stroke-width="1.900" fill="none"/></svg>
<div style="left:171px;top:140px;width:15px;height:58px;background:#cdcdcd;"></div>
<div style="left:4px;top:359px;width:184px;height:1px;background:#000;"></div>
<div style="left:7px;top:359px;width:73px;height:20px;background:#fff;border:1px solid #000;border-top:none;box-sizing:border-box;box-shadow:1px 1px 0 #808080"></div>
<span style="top:363px;font-size:12px;color:#000;left:18px;transform:scaleX(0.9825);transform-origin:0 0;">Символы</span>
<span style="top:363px;font-size:12px;color:#727272;left:90px;transform:scaleX(1.0094);transform-origin:0 0;">Тиковый график</span>
<div style="left:1px;top:381px;width:190px;height:3px;background:#fafafa;"></div>
<div style="left:1px;top:384px;width:190px;height:1px;background:#a0a0a0;"></div>
<div style="left:4px;top:387px;width:170px;height:13px;background:linear-gradient(90deg,#c2d5ec 0%,#d9e4f2 70%,#e9eef6 100%);"></div>
<span style="top:388px;font-size:11px;color:#000;left:7px;">Навигатор</span>
<svg style="left:178px;top:390px" width="8" height="8" viewBox="0 0 8 8"><path d="M1.5 1.5L6.5 6.5M6.5 1.5L1.5 6.5" stroke="#000" stroke-width="1.6"/></svg>
<div style="left:4px;top:402px;width:184px;height:238px;background:#fff;"></div>
<div style="left:4px;top:401px;width:1px;height:239px;background:#a0a0a0;"></div>
<div style="left:4px;top:401px;width:184px;height:1px;background:#a0a0a0;"></div>
<div style="left:18px;top:403px;width:1px;height:222px;background:repeating-linear-gradient(180deg,#a0a0a0 0 1px,transparent 1px 2px);"></div>
<div style="left:39px;top:403px;width:1px;height:207px;background:repeating-linear-gradient(180deg,#a0a0a0 0 1px,transparent 1px 2px);"></div>
<div style="left:5px;top:403px;width:166px;height:237px;overflow:hidden">
<div style="left:35px;top:10px;width:11px;height:1px;background:repeating-linear-gradient(90deg,#a0a0a0 0 1px,transparent 1px 2px);"></div>
<svg style="left:47px;top:0px" width="18" height="16" viewBox="0 0 18 16"><path d="M4.800 8C5.300 12.800 11.700 12.800 12.200 8Z" fill="#f4d25a" stroke="#b08a2c" stroke-width="0.700"/>
<ellipse cx="8.500" cy="6.500" rx="8" ry="2.900" fill="#4a90dc" stroke="#2c69b4" stroke-width="0.800"/>
<path d="M4.800 5.800C4.800 -0.600 12.200 -0.600 12.200 5.800C10 7 7 7 4.800 5.800Z" fill="#7ab8ee" stroke="#2c69b4" stroke-width="0.800"/>
<path d="M6.500 2.500C7.500 1.500 9 1.300 10 1.800" stroke="#c4e2fa" stroke-width="0.900" fill="none"/>
<path d="M13 8.500L17 12L13.300 15.600L9.700 12.200Z" fill="#b4b4b4" stroke="#5a5a5a" stroke-width="0.900"/></svg>
<span style="top:3px;font-size:12px;color:#000;left:70px;transform:scaleX(0.9063);transform-origin:0 0;">EA-F2%26S2-v4</span>
<div style="left:35px;top:28px;width:11px;height:1px;background:repeating-linear-gradient(90deg,#a0a0a0 0 1px,transparent 1px 2px);"></div>
<svg style="left:47px;top:18px" width="18" height="16" viewBox="0 0 18 16"><path d="M4.800 8C5.300 12.800 11.700 12.800 12.200 8Z" fill="#f4d25a" stroke="#b08a2c" stroke-width="0.700"/>
<ellipse cx="8.500" cy="6.500" rx="8" ry="2.900" fill="#4a90dc" stroke="#2c69b4" stroke-width="0.800"/>
<path d="M4.800 5.800C4.800 -0.600 12.200 -0.600 12.200 5.800C10 7 7 7 4.800 5.800Z" fill="#7ab8ee" stroke="#2c69b4" stroke-width="0.800"/>
<path d="M6.500 2.500C7.500 1.500 9 1.300 10 1.800" stroke="#c4e2fa" stroke-width="0.900" fill="none"/>
<path d="M13 8.500L17 12L13.300 15.600L9.700 12.200Z" fill="#ffe066" stroke="#9a7a1c" stroke-width="0.900"/></svg>
<span style="top:21px;font-size:12px;color:#000;left:70px;transform:scaleX(0.9271);transform-origin:0 0;">eFXO.NetStop.1.2.</span>
<div style="left:35px;top:46px;width:11px;height:1px;background:repeating-linear-gradient(90deg,#a0a0a0 0 1px,transparent 1px 2px);"></div>
<svg style="left:47px;top:36px" width="18" height="16" viewBox="0 0 18 16"><path d="M4.800 8C5.300 12.800 11.700 12.800 12.200 8Z" fill="#f4d25a" stroke="#b08a2c" stroke-width="0.700"/>
<ellipse cx="8.500" cy="6.500" rx="8" ry="2.900" fill="#4a90dc" stroke="#2c69b4" stroke-width="0.800"/>
<path d="M4.800 5.800C4.800 -0.600 12.200 -0.600 12.200 5.800C10 7 7 7 4.800 5.800Z" fill="#7ab8ee" stroke="#2c69b4" stroke-width="0.800"/>
<path d="M6.500 2.500C7.500 1.500 9 1.300 10 1.800" stroke="#c4e2fa" stroke-width="0.900" fill="none"/>
<path d="M13 8.500L17 12L13.300 15.600L9.700 12.200Z" fill="#ffe066" stroke="#9a7a1c" stroke-width="0.900"/></svg>
<span style="top:39px;font-size:12px;color:#000;left:70px;transform:scaleX(0.9300);transform-origin:0 0;">FiboBars_rob</span>
<div style="left:35px;top:64px;width:11px;height:1px;background:repeating-linear-gradient(90deg,#a0a0a0 0 1px,transparent 1px 2px);"></div>
<svg style="left:47px;top:54px" width="18" height="16" viewBox="0 0 18 16"><path d="M4.800 8C5.300 12.800 11.700 12.800 12.200 8Z" fill="#f4d25a" stroke="#b08a2c" stroke-width="0.700"/>
<ellipse cx="8.500" cy="6.500" rx="8" ry="2.900" fill="#4a90dc" stroke="#2c69b4" stroke-width="0.800"/>
<path d="M4.800 5.800C4.800 -0.600 12.200 -0.600 12.200 5.800C10 7 7 7 4.800 5.800Z" fill="#7ab8ee" stroke="#2c69b4" stroke-width="0.800"/>
<path d="M6.500 2.500C7.500 1.500 9 1.300 10 1.800" stroke="#c4e2fa" stroke-width="0.900" fill="none"/>
<path d="M13 8.500L17 12L13.300 15.600L9.700 12.200Z" fill="#ffe066" stroke="#9a7a1c" stroke-width="0.900"/></svg>
<span style="top:57px;font-size:12px;color:#000;left:70px;transform:scaleX(0.9359);transform-origin:0 0;">Forex Hacked Pro</span>
<div style="left:35px;top:82px;width:11px;height:1px;background:repeating-linear-gradient(90deg,#a0a0a0 0 1px,transparent 1px 2px);"></div>
<svg style="left:47px;top:72px" width="18" height="16" viewBox="0 0 18 16"><path d="M4.800 8C5.300 12.800 11.700 12.800 12.200 8Z" fill="#f4d25a" stroke="#b08a2c" stroke-width="0.700"/>
<ellipse cx="8.500" cy="6.500" rx="8" ry="2.900" fill="#4a90dc" stroke="#2c69b4" stroke-width="0.800"/>
<path d="M4.800 5.800C4.800 -0.600 12.200 -0.600 12.200 5.800C10 7 7 7 4.800 5.800Z" fill="#7ab8ee" stroke="#2c69b4" stroke-width="0.800"/>
<path d="M6.500 2.500C7.500 1.500 9 1.300 10 1.800" stroke="#c4e2fa" stroke-width="0.900" fill="none"/>
<path d="M13 8.500L17 12L13.300 15.600L9.700 12.200Z" fill="#ffe066" stroke="#9a7a1c" stroke-width="0.900"/></svg>
<span style="top:75px;font-size:12px;color:#000;left:70px;transform:scaleX(0.9347);transform-origin:0 0;">Forex Vzlomshik P</span>
<span style="top:75px;font-size:12px;color:#000;left:163.5px;transform:scaleX(0.9300);transform-origin:0 0;">ro</span>
<div style="left:35px;top:100px;width:11px;height:1px;background:repeating-linear-gradient(90deg,#a0a0a0 0 1px,transparent 1px 2px);"></div>
<svg style="left:47px;top:90px" width="18" height="16" viewBox="0 0 18 16"><path d="M4.800 8C5.300 12.800 11.700 12.800 12.200 8Z" fill="#f4d25a" stroke="#b08a2c" stroke-width="0.700"/>
<ellipse cx="8.500" cy="6.500" rx="8" ry="2.900" fill="#4a90dc" stroke="#2c69b4" stroke-width="0.800"/>
<path d="M4.800 5.800C4.800 -0.600 12.200 -0.600 12.200 5.800C10 7 7 7 4.800 5.800Z" fill="#7ab8ee" stroke="#2c69b4" stroke-width="0.800"/>
<path d="M6.500 2.500C7.500 1.500 9 1.300 10 1.800" stroke="#c4e2fa" stroke-width="0.900" fill="none"/>
<path d="M13 8.500L17 12L13.300 15.600L9.700 12.200Z" fill="#ffe066" stroke="#9a7a1c" stroke-width="0.900"/></svg>
<span style="top:93px;font-size:12px;color:#000;left:70px;transform:scaleX(0.9420);transform-origin:0 0;">IFX One Click Trad</span>
<span style="top:93px;font-size:12px;color:#000;left:165.5px;transform:scaleX(0.9300);transform-origin:0 0;">ing</span>
<div style="left:35px;top:118px;width:11px;height:1px;background:repeating-linear-gradient(90deg,#a0a0a0 0 1px,transparent 1px 2px);"></div>
<svg style="left:47px;top:108px" width="18" height="16" viewBox="0 0 18 16"><path d="M4.800 8C5.300 12.800 11.700 12.800 12.200 8Z" fill="#f4d25a" stroke="#b08a2c" stroke-width="0.700"/>
<ellipse cx="8.500" cy="6.500" rx="8" ry="2.900" fill="#4a90dc" stroke="#2c69b4" stroke-width="0.800"/>
<path d="M4.800 5.800C4.800 -0.600 12.200 -0.600 12.200 5.800C10 7 7 7 4.800 5.800Z" fill="#7ab8ee" stroke="#2c69b4" stroke-width="0.800"/>
<path d="M6.500 2.500C7.500 1.500 9 1.300 10 1.800" stroke="#c4e2fa" stroke-width="0.900" fill="none"/>
<path d="M13 8.500L17 12L13.300 15.600L9.700 12.200Z" fill="#ffe066" stroke="#9a7a1c" stroke-width="0.900"/></svg>
<span style="top:111px;font-size:12px;color:#000;left:70px;transform:scaleX(0.8767);transform-origin:0 0;">IFX_MB</span>
<div style="left:35px;top:136px;width:11px;height:1px;background:repeating-linear-gradient(90deg,#a0a0a0 0 1px,transparent 1px 2px);"></div>
<svg style="left:47px;top:126px" width="18" height="16" viewBox="0 0 18 16"><path d="M4.800 8C5.300 12.800 11.700 12.800 12.200 8Z" fill="#f4d25a" stroke="#b08a2c" stroke-width="0.700"/>
<ellipse cx="8.500" cy="6.500" rx="8" ry="2.900" fill="#4a90dc" stroke="#2c69b4" stroke-width="0.800"/>
<path d="M4.800 5.800C4.800 -0.600 12.200 -0.600 12.200 5.800C10 7 7 7 4.800 5.800Z" fill="#7ab8ee" stroke="#2c69b4" stroke-width="0.800"/>
<path d="M6.500 2.500C7.500 1.500 9 1.300 10 1.800" stroke="#c4e2fa" stroke-width="0.900" fill="none"/>
<path d="M13 8.500L17 12L13.300 15.600L9.700 12.200Z" fill="#ffe066" stroke="#9a7a1c" stroke-width="0.900"/></svg>
<span style="top:129px;font-size:12px;color:#000;left:70px;transform:scaleX(0.9577);transform-origin:0 0;">MACD Sample</span>
<div style="left:35px;top:154px;width:11px;height:1px;background:repeating-linear-gradient(90deg,#a0a0a0 0 1px,transparent 1px 2px);"></div>
<svg style="left:47px;top:144px" width="18" height="16" viewBox="0 0 18 16"><path d="M4.800 8C5.300 12.800 11.700 12.800 12.200 8Z" fill="#f4d25a" stroke="#b08a2c" stroke-width="0.700"/>
<ellipse cx="8.500" cy="6.500" rx="8" ry="2.900" fill="#4a90dc" stroke="#2c69b4" stroke-width="0.800"/>
<path d="M4.800 5.800C4.800 -0.600 12.200 -0.600 12.200 5.800C10 7 7 7 4.800 5.800Z" fill="#7ab8ee" stroke="#2c69b4" stroke-width="0.800"/>
<path d="M6.500 2.500C7.500 1.500 9 1.300 10 1.800" stroke="#c4e2fa" stroke-width="0.900" fill="none"/>
<path d="M13 8.500L17 12L13.300 15.600L9.700 12.200Z" fill="#ffe066" stroke="#9a7a1c" stroke-width="0.900"/></svg>
<span style="top:147px;font-size:12px;color:#000;left:70px;">Moving Average</span>
<div style="left:35px;top:172px;width:11px;height:1px;background:repeating-linear-gradient(90deg,#a0a0a0 0 1px,transparent 1px 2px);"></div>
<svg style="left:47px;top:162px" width="18" height="16" viewBox="0 0 18 16"><path d="M4.800 8C5.300 12.800 11.700 12.800 12.200 8Z" fill="#f4d25a" stroke="#b08a2c" stroke-width="0.700"/>
<ellipse cx="8.500" cy="6.500" rx="8" ry="2.900" fill="#4a90dc" stroke="#2c69b4" stroke-width="0.800"/>
<path d="M4.800 5.800C4.800 -0.600 12.200 -0.600 12.200 5.800C10 7 7 7 4.800 5.800Z" fill="#7ab8ee" stroke="#2c69b4" stroke-width="0.800"/>
<path d="M6.500 2.500C7.500 1.500 9 1.300 10 1.800" stroke="#c4e2fa" stroke-width="0.900" fill="none"/>
<path d="M13 8.500L17 12L13.300 15.600L9.700 12.200Z" fill="#ffe066" stroke="#9a7a1c" stroke-width="0.900"/></svg>
<span style="top:165px;font-size:12px;color:#000;left:70px;transform:scaleX(0.9043);transform-origin:0 0;">Op_AB</span>
<div style="left:35px;top:190px;width:11px;height:1px;background:repeating-linear-gradient(90deg,#a0a0a0 0 1px,transparent 1px 2px);"></div>
<svg style="left:47px;top:180px" width="18" height="16" viewBox="0 0 18 16"><path d="M4.800 8C5.300 12.800 11.700 12.800 12.200 8Z" fill="#f4d25a" stroke="#b08a2c" stroke-width="0.700"/>
<ellipse cx="8.500" cy="6.500" rx="8" ry="2.900" fill="#4a90dc" stroke="#2c69b4" stroke-width="0.800"/>
<path d="M4.800 5.800C4.800 -0.600 12.200 -0.600 12.200 5.800C10 7 7 7 4.800 5.800Z" fill="#7ab8ee" stroke="#2c69b4" stroke-width="0.800"/>
<path d="M6.500 2.500C7.500 1.500 9 1.300 10 1.800" stroke="#c4e2fa" stroke-width="0.900" fill="none"/>
<path d="M13 8.500L17 12L13.300 15.600L9.700 12.200Z" fill="#ffe066" stroke="#9a7a1c" stroke-width="0.900"/></svg>
<span style="top:183px;font-size:12px;color:#000;left:70px;transform:scaleX(0.9519);transform-origin:0 0;">ProTrader</span>
<div style="left:35px;top:208px;width:11px;height:1px;background:repeating-linear-gradient(90deg,#a0a0a0 0 1px,transparent 1px 2px);"></div>
<svg style="left:47px;top:198px" width="18" height="16" viewBox="0 0 18 16"><path d="M4.800 8C5.300 12.800 11.700 12.800 12.200 8Z" fill="#f4d25a" stroke="#b08a2c" stroke-width="0.700"/>
<ellipse cx="8.500" cy="6.500" rx="8" ry="2.900" fill="#4a90dc" stroke="#2c69b4" stroke-width="0.800"/>
<path d="M4.800 5.800C4.800 -0.600 12.200 -0.600 12.200 5.800C10 7 7 7 4.800 5.800Z" fill="#7ab8ee" stroke="#2c69b4" stroke-width="0.800"/>
<path d="M6.500 2.500C7.500 1.500 9 1.300 10 1.800" stroke="#c4e2fa" stroke-width="0.900" fill="none"/>
<path d="M13 8.500L17 12L13.300 15.600L9.700 12.200Z" fill="#ffe066" stroke="#9a7a1c" stroke-width="0.900"/></svg>
<span style="top:201px;font-size:12px;color:#000;left:70px;transform:scaleX(0.9471);transform-origin:0 0;">RenkoLiveChart_v</span>
<span style="top:201px;font-size:12px;color:#000;left:163.5px;transform:scaleX(0.9300);transform-origin:0 0;">2</span>
</div>
<div style="left:15px;top:625px;width:8px;height:8px;background:#fff;border:1px solid #909090;box-sizing:border-box"></div>
<div style="left:17px;top:628px;width:4px;height:1px;background:#000;"></div>
<div style="left:18px;top:627px;width:1px;height:4px;background:#000;"></div>
<div style="left:23px;top:629px;width:7px;height:1px;background:repeating-linear-gradient(90deg,#a0a0a0 0 1px,transparent 1px 2px);"></div>
<svg style="left:31px;top:621px" width="17" height="16" viewBox="0 0 17 16"><path d="M3 2H13V12H3Z" fill="#f7d774" stroke="#b8860b" stroke-width="0.9"/><path d="M2 2.5C2 1 4 1 4 2.5M12 12C12 13.5 14 13.5 14 12" stroke="#b8860b" fill="#f7d774"/><path d="M5 5H11M5 7H11M5 9H9" stroke="#b8860b" stroke-width="0.8"/><path d="M12 10L15.5 13L13 15.5L10 12.5Z" fill="#ffd84a" stroke="#8a6d1c" stroke-width="0.8"/></svg>
<span style="top:623px;font-size:12px;color:#000;left:53px;">Скрипты</span>
<div style="left:171px;top:403px;width:17px;height:237px;background:#f0f0f0;"></div>
<svg style="left:173px;top:408px" width="11" height="8" viewBox="0 0 11 8"><path d="M2.200 6L5.500 2.700L8.800 6" stroke="#555" stroke-width="1.900" fill="none"/></svg>
<svg style="left:173px;top:628px" width="11" height="8" viewBox="0 0 11 8"><path d="M2.200 2L5.500 5.300L8.800 2" stroke="#555" stroke-width="1.900" fill="none"/></svg>
<div style="left:171px;top:491px;width:15px;height:130px;background:#c1c1c1;"></div>
<div style="left:4px;top:640px;width:184px;height:1px;background:#000;"></div>
<div style="left:7px;top:640px;width:61px;height:20px;background:#fff;border:1px solid #000;border-top:none;box-sizing:border-box;box-shadow:1px 1px 0 #808080"></div>
<span style="top:644px;font-size:12px;color:#000;left:17px;transform:scaleX(1.0135);transform-origin:0 0;">Общие</span>
<span style="top:644px;font-size:12px;color:#727272;left:77px;">Избранное</span>
<div style="left:148px;top:645px;width:1px;height:13px;background:#696969;"></div>
<div style="left:1px;top:665px;width:190px;height:1px;background:#fff;"></div>
<div style="left:1px;top:666px;width:190px;height:1px;background:#a0a0a0;"></div>
<div style="left:188px;top:106px;width:3px;height:560px;background:#fbfbfb;"></div>
<div style="left:191px;top:106px;width:1px;height:560px;background:#a0a0a0;"></div>
<div style="left:192px;top:106px;width:953px;height:538px;background:#696969;"></div>
<div style="left:193px;top:107px;width:951px;height:537px;background:#000;"></div>
<div style="left:1144px;top:106px;width:1px;height:539px;background:#e3e3e3;"></div>
<div style="left:1145px;top:106px;width:1px;height:539px;background:#f0f0f0;"></div>
<div style="left:195px;top:109px;width:910px;height:1px;background:#fff;"></div>
<div style="left:195px;top:109px;width:1px;height:515px;background:#fff;"></div>
<div style="left:1104px;top:109px;width:1px;height:515px;background:#fff;"></div>
<div style="left:195px;top:283px;width:910px;height:1px;background:#fff;"></div>
<div style="left:195px;top:285px;width:910px;height:1px;background:#fff;"></div>
<div style="left:195px;top:387px;width:910px;height:1px;background:#fff;"></div>
<div style="left:195px;top:389px;width:910px;height:1px;background:#fff;"></div>
<div style="left:195px;top:623px;width:910px;height:1px;background:#fff;"></div>
<svg style="left:199px;top:115px" width="8" height="6" viewBox="0 0 8 6"><path d="M0 0.5H8L4 5.5Z" fill="#fff"/></svg>
<span style="top:113px;font-size:9.5px;color:#fff;left:212px;transform:scaleX(0.9912);transform-origin:0 0;">AUDUSD,H1  0.7611 0.7614 0.7590 0.7590</span>
<span style="top:126px;font-size:9.5px;color:#fff;left:199px;transform:scaleX(0.9866);transform-origin:0 0;">Процент прибыли относительно баланса на начало года</span>
<span style="top:142px;font-size:12px;color:#808080;left:224px;transform:scaleX(1.0243);transform-origin:0 0;">Прибыль</span>
<span style="top:142px;font-size:12px;color:#808080;left:346px;transform:scaleX(0.9758);transform-origin:0 0;">в пунктах</span>
<span style="top:142px;font-size:12px;color:#808080;left:461px;transform:scaleX(0.9523);transform-origin:0 0;">в валюте</span>
<span style="top:154px;font-size:12px;color:#808080;left:199px;transform:scaleX(1.0350);transform-origin:0 0;">Текущая прибыль</span>
<span style="top:154px;font-size:12px;color:#dc143c;left:361px;transform:scaleX(1.0350);transform-origin:0 0;">-4708</span>
<span style="top:154px;font-size:12px;color:#dc143c;left:426px;transform:scaleX(1.0350);transform-origin:0 0;">-5946.28</span>
<span style="top:154px;font-size:12px;color:#dc143c;left:501px;transform:scaleX(1.0350);transform-origin:0 0;">-12.11 %</span>
<span style="top:166px;font-size:12px;color:#808080;left:199px;transform:scaleX(1.0350);transform-origin:0 0;">Прибыль за сегодня</span>
<span style="top:166px;font-size:12px;color:#008000;left:361px;transform:scaleX(1.0350);transform-origin:0 0;">99</span>
<span style="top:166px;font-size:12px;color:#008000;left:426px;transform:scaleX(1.0350);transform-origin:0 0;">81.86</span>
<span style="top:166px;font-size:12px;color:#008000;left:501px;transform:scaleX(1.0350);transform-origin:0 0;">0.17 %</span>
<span style="top:178px;font-size:12px;color:#808080;left:199px;transform:scaleX(1.0350);transform-origin:0 0;">Прибыль за 2016.10.06</span>
<span style="top:178px;font-size:12px;color:#008000;left:361px;transform:scaleX(1.0350);transform-origin:0 0;">341</span>
<span style="top:178px;font-size:12px;color:#008000;left:426px;transform:scaleX(1.0350);transform-origin:0 0;">253.19</span>
<span style="top:178px;font-size:12px;color:#008000;left:501px;transform:scaleX(1.0350);transform-origin:0 0;">0.52 %</span>
<span style="top:190px;font-size:12px;color:#808080;left:199px;transform:scaleX(1.0350);transform-origin:0 0;">Прибыль за 2016.10.05</span>
<span style="top:190px;font-size:12px;color:#008000;left:361px;transform:scaleX(1.0350);transform-origin:0 0;">156</span>
<span style="top:190px;font-size:12px;color:#008000;left:426px;transform:scaleX(1.0350);transform-origin:0 0;">176.92</span>
<span style="top:190px;font-size:12px;color:#008000;left:501px;transform:scaleX(1.0350);transform-origin:0 0;">0.36 %</span>
<span style="top:202px;font-size:12px;color:#808080;left:199px;transform:scaleX(1.0350);transform-origin:0 0;">Прибыль за 2016.10.04</span>
<span style="top:202px;font-size:12px;color:#008000;left:361px;transform:scaleX(1.0350);transform-origin:0 0;">577</span>
<span style="top:202px;font-size:12px;color:#008000;left:426px;transform:scaleX(1.0350);transform-origin:0 0;">434.47</span>
<span style="top:202px;font-size:12px;color:#008000;left:501px;transform:scaleX(1.0350);transform-origin:0 0;">0.89 %</span>
<span style="top:214px;font-size:12px;color:#808080;left:199px;transform:scaleX(1.0350);transform-origin:0 0;">Прибыль за 2016.10.03</span>
<span style="top:214px;font-size:12px;color:#008000;left:361px;transform:scaleX(1.0350);transform-origin:0 0;">443</span>
<span style="top:214px;font-size:12px;color:#008000;left:426px;transform:scaleX(1.0350);transform-origin:0 0;">318.92</span>
<span style="top:214px;font-size:12px;color:#008000;left:501px;transform:scaleX(1.0350);transform-origin:0 0;">0.65 %</span>
<span style="top:226px;font-size:12px;color:#808080;left:199px;transform:scaleX(1.0350);transform-origin:0 0;">Прибыль за неделю</span>
<span style="top:226px;font-size:12px;color:#008000;left:361px;transform:scaleX(1.0350);transform-origin:0 0;">1616</span>
<span style="top:226px;font-size:12px;color:#008000;left:426px;transform:scaleX(1.0350);transform-origin:0 0;">1265.36</span>
<span style="top:226px;font-size:12px;color:#008000;left:501px;transform:scaleX(1.0350);transform-origin:0 0;">2.58 %</span>
<span style="top:238px;font-size:12px;color:#808080;left:199px;transform:scaleX(1.0350);transform-origin:0 0;">Прибыль за месяц</span>
<span style="top:238px;font-size:12px;color:#008000;left:361px;transform:scaleX(1.0350);transform-origin:0 0;">1616</span>
<span style="top:238px;font-size:12px;color:#008000;left:426px;transform:scaleX(1.0350);transform-origin:0 0;">1265.36</span>
<span style="top:238px;font-size:12px;color:#008000;left:501px;transform:scaleX(1.0350);transform-origin:0 0;">2.58 %</span>
<span style="top:250px;font-size:12px;color:#808080;left:199px;transform:scaleX(1.0350);transform-origin:0 0;">Прибыль за квартал</span>
<span style="top:250px;font-size:12px;color:#008000;left:361px;transform:scaleX(1.0350);transform-origin:0 0;">1616</span>
<span style="top:250px;font-size:12px;color:#008000;left:426px;transform:scaleX(1.0350);transform-origin:0 0;">1265.36</span>
<span style="top:250px;font-size:12px;color:#008000;left:501px;transform:scaleX(1.0350);transform-origin:0 0;">2.58 %</span>
<span style="top:262px;font-size:12px;color:#808080;left:199px;transform:scaleX(1.0350);transform-origin:0 0;">Прибыль за год</span>
<span style="top:262px;font-size:12px;color:#008000;left:361px;transform:scaleX(1.0350);transform-origin:0 0;">1616</span>
<span style="top:262px;font-size:12px;color:#008000;left:426px;transform:scaleX(1.0350);transform-origin:0 0;">1265.36</span>
<span style="top:262px;font-size:12px;color:#008000;left:501px;transform:scaleX(1.0350);transform-origin:0 0;">2.58 %</span>
<div style="left:1105px;top:142px;width:3px;height:1px;background:#fff;"></div>
<span style="top:139px;font-size:9px;color:#fff;left:1110px;transform:scaleX(1.0170);transform-origin:0 0;">0.7675</span>
<div style="left:1105px;top:176px;width:3px;height:1px;background:#fff;"></div>
<span style="top:173px;font-size:9px;color:#fff;left:1110px;transform:scaleX(1.0170);transform-origin:0 0;">0.7615</span>
<div style="left:1105px;top:211px;width:3px;height:1px;background:#fff;"></div>
<span style="top:208px;font-size:9px;color:#fff;left:1110px;transform:scaleX(1.0170);transform-origin:0 0;">0.7555</span>
<div style="left:1105px;top:245px;width:3px;height:1px;background:#fff;"></div>
<span style="top:242px;font-size:9px;color:#fff;left:1110px;transform:scaleX(1.0170);transform-origin:0 0;">0.7495</span>
<div style="left:1105px;top:280px;width:3px;height:1px;background:#fff;"></div>
<span style="top:277px;font-size:9px;color:#fff;left:1110px;transform:scaleX(1.0170);transform-origin:0 0;">0.7435</span>
<div style="left:1106px;top:186px;width:36px;height:11px;background:#fff;"></div>
<span style="top:188px;font-size:9px;color:#000;left:1110px;transform:scaleX(1.0170);transform-origin:0 0;">0.7590</span>
<span style="top:288px;font-size:9px;color:#fff;left:1108px;">0</span>
<span style="top:376px;font-size:9px;color:#fff;left:1108px;">0</span>
<div style="left:1108px;top:392px;width:36px;height:12px;overflow:hidden"><span style="top:0px;font-size:9px;color:#fff;left:0px;">-9000000</span></div>
<div style="left:1109px;top:612px;width:35px;height:12px;overflow:hidden"><span style="top:0px;font-size:9px;color:#fff;left:0px;">9000000</span></div>
<div style="left:1105px;top:287px;width:2px;height:1px;background:#fff;"></div>
<div style="left:1105px;top:391px;width:2px;height:1px;background:#fff;"></div>
<div style="left:1105px;top:386px;width:2px;height:1px;background:#fff;"></div>
<span style="top:290px;font-size:10px;color:#fff;left:200px;transform:scaleX(0.8521);transform-origin:0 0;">Exposure</span>
<span style="top:302px;font-size:12px;color:#20b2aa;left:206px;transform:scaleX(0.9950);transform-origin:0 0;">Symbol</span>
<span style="top:302px;font-size:12px;color:#20b2aa;left:276px;transform:scaleX(0.9950);transform-origin:0 0;">Deals</span>
<span style="top:302px;font-size:12px;color:#20b2aa;left:326px;transform:scaleX(0.9950);transform-origin:0 0;">Buy lots</span>
<span style="top:302px;font-size:12px;color:#20b2aa;left:376px;transform:scaleX(0.9950);transform-origin:0 0;">Buy price</span>
<span style="top:302px;font-size:12px;color:#20b2aa;left:456px;transform:scaleX(0.9950);transform-origin:0 0;">Sell lots</span>
<span style="top:302px;font-size:12px;color:#20b2aa;left:506px;transform:scaleX(0.9950);transform-origin:0 0;">Sell price</span>
<span style="top:302px;font-size:12px;color:#20b2aa;left:586px;transform:scaleX(0.9950);transform-origin:0 0;">Net lots</span>
<span style="top:302px;font-size:12px;color:#20b2aa;left:656px;transform:scaleX(0.9950);transform-origin:0 0;">Profit</span>
<span style="top:317px;font-size:12px;color:#20b2aa;left:206px;transform:scaleX(1.0300);transform-origin:0 0;">GBPUSD</span>
<span style="top:317px;font-size:12px;color:#20b2aa;left:276px;transform:scaleX(1.0300);transform-origin:0 0;">11</span>
<span style="top:317px;font-size:12px;color:#20b2aa;left:326px;transform:scaleX(1.0300);transform-origin:0 0;">0.32</span>
<span style="top:317px;font-size:12px;color:#20b2aa;left:376px;transform:scaleX(1.0300);transform-origin:0 0;">1.2717</span>
<span style="top:317px;font-size:12px;color:#20b2aa;left:456px;transform:scaleX(1.0300);transform-origin:0 0;">0.00</span>
<span style="top:317px;font-size:12px;color:#20b2aa;left:506px;transform:scaleX(1.0300);transform-origin:0 0;">0.0000</span>
<span style="top:317px;font-size:12px;color:#20b2aa;left:586px;transform:scaleX(1.0300);transform-origin:0 0;">0.32</span>
<span style="top:317px;font-size:12px;color:#20b2aa;left:656px;transform:scaleX(1.0300);transform-origin:0 0;">-5273.28</span>
<span style="top:331px;font-size:12px;color:#20b2aa;left:206px;transform:scaleX(1.0300);transform-origin:0 0;">USDCAD</span>
<span style="top:331px;font-size:12px;color:#20b2aa;left:276px;transform:scaleX(1.0300);transform-origin:0 0;">6</span>
<span style="top:331px;font-size:12px;color:#20b2aa;left:326px;transform:scaleX(1.0300);transform-origin:0 0;">0.00</span>
<span style="top:331px;font-size:12px;color:#20b2aa;left:376px;transform:scaleX(1.0300);transform-origin:0 0;">0.0000</span>
<span style="top:331px;font-size:12px;color:#20b2aa;left:456px;transform:scaleX(1.0300);transform-origin:0 0;">0.10</span>
<span style="top:331px;font-size:12px;color:#20b2aa;left:506px;transform:scaleX(1.0300);transform-origin:0 0;">1.3163</span>
<span style="top:331px;font-size:12px;color:#20b2aa;left:586px;transform:scaleX(1.0300);transform-origin:0 0;">-0.10</span>
<span style="top:331px;font-size:12px;color:#20b2aa;left:656px;transform:scaleX(1.0300);transform-origin:0 0;">-413.30</span>
<span style="top:345px;font-size:12px;color:#20b2aa;left:206px;transform:scaleX(1.0300);transform-origin:0 0;">USDCHF</span>
<span style="top:345px;font-size:12px;color:#20b2aa;left:276px;transform:scaleX(1.0300);transform-origin:0 0;">7</span>
<span style="top:345px;font-size:12px;color:#20b2aa;left:326px;transform:scaleX(1.0300);transform-origin:0 0;">0.00</span>
<span style="top:345px;font-size:12px;color:#20b2aa;left:376px;transform:scaleX(1.0300);transform-origin:0 0;">0.0000</span>
<span style="top:345px;font-size:12px;color:#20b2aa;left:456px;transform:scaleX(1.0300);transform-origin:0 0;">0.10</span>
<span style="top:345px;font-size:12px;color:#20b2aa;left:506px;transform:scaleX(1.0300);transform-origin:0 0;">0.9760</span>
<span style="top:345px;font-size:12px;color:#20b2aa;left:586px;transform:scaleX(1.0300);transform-origin:0 0;">-0.10</span>
<span style="top:345px;font-size:12px;color:#20b2aa;left:656px;transform:scaleX(1.0300);transform-origin:0 0;">-259.70</span>
<span style="top:394px;font-size:10px;color:#fff;left:200px;transform:scaleX(0.9697);transform-origin:0 0;">cm History Info v12</span>
<span style="top:394px;font-size:11px;color:#c0c0c0;left:296px;transform:scaleX(1.0275);transform-origin:0 0;">Счет 0 /  / 1:0</span>
<span style="top:394px;font-size:11px;color:#c0c0c0;left:696px;transform:scaleX(1.0044);transform-origin:0 0;">Сканирование счета с 2016.10.03 по 2016.10.07 всего 4 дн.</span>
<div style="left:1045px;top:394px;width:59px;height:14px;overflow:hidden"><span style="top:0px;font-size:11px;color:#c0c0c0;left:0px;transform:scaleX(0.9473);transform-origin:0 0;">Magik номер</span></div>
<span style="top:412px;font-size:11px;color:#c0c0c0;left:200px;transform:scaleX(0.9500);transform-origin:0 0;">Symbols</span>
<span style="top:412px;font-size:11px;color:#c0c0c0;left:246px;">4</span>
<span style="top:422px;font-size:11px;color:#c0c0c0;left:200px;transform:scaleX(0.9500);transform-origin:0 0;">Equity</span>
<span style="top:422px;font-size:11px;color:#c0c0c0;left:246px;">44406.52</span>
<span style="top:432px;font-size:11px;color:#c0c0c0;left:200px;transform:scaleX(0.9500);transform-origin:0 0;">Balance</span>
<span style="top:432px;font-size:11px;color:#c0c0c0;left:246px;">50352.80</span>
<span style="top:442px;font-size:11px;color:#c0c0c0;left:200px;transform:scaleX(0.9500);transform-origin:0 0;">FreeMar.</span>
<span style="top:442px;font-size:11px;color:#c0c0c0;left:246px;">44027.92</span>
<span style="top:413px;font-size:12px;color:#4682b4;left:316px;transform:scaleX(1.0097);transform-origin:0 0;">История</span>
<span style="top:427px;font-size:11px;color:#c0c0c0;left:316px;transform:scaleX(0.9607);transform-origin:0 0;">Orders 96</span>
<span style="top:486px;font-size:12px;color:#4682b4;left:316px;transform:scaleX(1.0478);transform-origin:0 0;">Текушие</span>
<span style="top:500px;font-size:11px;color:#c0c0c0;left:316px;transform:scaleX(0.9926);transform-origin:0 0;">Orders 24+0</span>
<span style="top:413px;font-size:12px;color:#4682b4;left:396px;transform:scaleX(0.9075);transform-origin:0 0;">GBPUSD</span>
<span style="top:486px;font-size:12px;color:#4682b4;left:396px;transform:scaleX(0.9075);transform-origin:0 0;">GBPUSD</span>
<span style="top:427px;font-size:12px;color:#1e9a1e;left:396px;transform:scaleX(1.0353);transform-origin:0 0;">802.12</span>
<span style="top:440px;font-size:11px;color:#4682b4;left:396px;transform:scaleX(0.9918);transform-origin:0 0;">тип</span>
<span style="top:440px;font-size:11px;color:#4682b4;left:422px;transform:scaleX(0.9806);transform-origin:0 0;">Lot</span>
<span style="top:453px;font-size:10px;color:#008000;left:396px;">B 0</span>
<span style="top:453px;font-size:10px;color:#008000;left:423px;transform:scaleX(1.0787);transform-origin:0 0;">0.00</span>
<span style="top:463px;font-size:10px;color:#008000;left:396px;">S 53</span>
<span style="top:463px;font-size:10px;color:#008000;left:429px;transform:scaleX(1.0787);transform-origin:0 0;">0.58</span>
<span style="top:497px;font-size:13px;color:#ff0000;left:396px;">-5273.28</span>
<span style="top:513px;font-size:10px;color:#008000;left:396px;">B 11</span>
<span style="top:513px;font-size:10px;color:#008000;left:429px;transform:scaleX(1.0787);transform-origin:0 0;">0.32</span>
<span style="top:523px;font-size:10px;color:#008000;left:396px;">S 0</span>
<span style="top:523px;font-size:10px;color:#008000;left:423px;transform:scaleX(1.0787);transform-origin:0 0;">0.00</span>
<span style="top:413px;font-size:12px;color:#4682b4;left:476px;transform:scaleX(0.9078);transform-origin:0 0;">EURUSD</span>
<span style="top:486px;font-size:12px;color:#4682b4;left:476px;transform:scaleX(0.9078);transform-origin:0 0;">EURUSD</span>
<span style="top:427px;font-size:12px;color:#1e9a1e;left:476px;transform:scaleX(1.0353);transform-origin:0 0;">253.43</span>
<span style="top:440px;font-size:11px;color:#4682b4;left:476px;transform:scaleX(0.9918);transform-origin:0 0;">тип</span>
<span style="top:440px;font-size:11px;color:#4682b4;left:502px;transform:scaleX(0.9806);transform-origin:0 0;">Lot</span>
<span style="top:453px;font-size:10px;color:#008000;left:476px;">B 6</span>
<span style="top:453px;font-size:10px;color:#008000;left:503px;transform:scaleX(1.0787);transform-origin:0 0;">0.07</span>
<span style="top:463px;font-size:10px;color:#008000;left:476px;">S 18</span>
<span style="top:463px;font-size:10px;color:#008000;left:509px;transform:scaleX(1.0787);transform-origin:0 0;">0.20</span>
<span style="top:497px;font-size:13px;color:#d8d8d8;left:476px;">0.00</span>
<span style="top:513px;font-size:10px;color:#008000;left:476px;">B 0</span>
<span style="top:513px;font-size:10px;color:#008000;left:503px;transform:scaleX(1.0787);transform-origin:0 0;">0.00</span>
<span style="top:523px;font-size:10px;color:#008000;left:476px;">S 0</span>
<span style="top:523px;font-size:10px;color:#008000;left:503px;transform:scaleX(1.0787);transform-origin:0 0;">0.00</span>
<span style="top:413px;font-size:12px;color:#4682b4;left:556px;transform:scaleX(0.9078);transform-origin:0 0;">USDCAD</span>
<span style="top:486px;font-size:12px;color:#4682b4;left:556px;transform:scaleX(0.9078);transform-origin:0 0;">USDCAD</span>
<span style="top:427px;font-size:12px;color:#1e9a1e;left:556px;transform:scaleX(1.0611);transform-origin:0 0;">112.12</span>
<span style="top:440px;font-size:11px;color:#4682b4;left:556px;transform:scaleX(0.9918);transform-origin:0 0;">тип</span>
<span style="top:440px;font-size:11px;color:#4682b4;left:582px;transform:scaleX(0.9806);transform-origin:0 0;">Lot</span>
<span style="top:453px;font-size:10px;color:#008000;left:556px;">B 9</span>
<span style="top:453px;font-size:10px;color:#008000;left:583px;transform:scaleX(1.0787);transform-origin:0 0;">0.10</span>
<span style="top:463px;font-size:10px;color:#008000;left:556px;">S 4</span>
<span style="top:463px;font-size:10px;color:#008000;left:583px;transform:scaleX(1.0787);transform-origin:0 0;">0.04</span>
<span style="top:497px;font-size:13px;color:#ff0000;left:556px;">-413.30</span>
<span style="top:513px;font-size:10px;color:#008000;left:556px;">B 0</span>
<span style="top:513px;font-size:10px;color:#008000;left:583px;transform:scaleX(1.0787);transform-origin:0 0;">0.00</span>
<span style="top:523px;font-size:10px;color:#008000;left:556px;">S 6</span>
<span style="top:523px;font-size:10px;color:#008000;left:583px;transform:scaleX(1.0787);transform-origin:0 0;">0.10</span>
<span style="top:413px;font-size:12px;color:#4682b4;left:636px;transform:scaleX(0.9200);transform-origin:0 0;">USDCHF</span>
<span style="top:486px;font-size:12px;color:#4682b4;left:636px;transform:scaleX(0.9200);transform-origin:0 0;">USDCHF</span>
<span style="top:427px;font-size:12px;color:#1e9a1e;left:636px;transform:scaleX(1.0656);transform-origin:0 0;">97.69</span>
<span style="top:440px;font-size:11px;color:#4682b4;left:636px;transform:scaleX(0.9918);transform-origin:0 0;">тип</span>
<span style="top:440px;font-size:11px;color:#4682b4;left:662px;transform:scaleX(0.9806);transform-origin:0 0;">Lot</span>
<span style="top:453px;font-size:10px;color:#008000;left:636px;">B 0</span>
<span style="top:453px;font-size:10px;color:#008000;left:663px;transform:scaleX(1.0787);transform-origin:0 0;">0.00</span>
<span style="top:463px;font-size:10px;color:#008000;left:636px;">S 6</span>
<span style="top:463px;font-size:10px;color:#008000;left:663px;transform:scaleX(1.0787);transform-origin:0 0;">0.10</span>
<span style="top:497px;font-size:13px;color:#ff0000;left:636px;">-259.70</span>
<span style="top:513px;font-size:10px;color:#008000;left:636px;">B 0</span>
<span style="top:513px;font-size:10px;color:#008000;left:663px;transform:scaleX(1.0787);transform-origin:0 0;">0.00</span>
<span style="top:523px;font-size:10px;color:#008000;left:636px;">S 7</span>
<span style="top:523px;font-size:10px;color:#008000;left:663px;transform:scaleX(1.0787);transform-origin:0 0;">0.10</span>
<span style="top:413px;font-size:12px;color:#4682b4;left:716px;">ИТОГО</span>
<span style="top:427px;font-size:12px;color:#1e9a1e;left:716px;transform:scaleX(1.0371);transform-origin:0 0;">1265.36</span>
<span style="top:497px;font-size:13px;color:#ff0000;left:716px;transform:scaleX(0.9936);transform-origin:0 0;">-5946.28</span>
<span style="top:607px;font-size:11px;color:#c0c0c0;left:200px;transform:scaleX(0.9851);transform-origin:0 0;">Copyright © 2012 cmillion@narod.ru</span>
<span style="top:413px;font-size:12px;color:#a8a8a8;left:986px;transform:scaleX(1.0243);transform-origin:0 0;">Прибыль</span>
<span style="top:428px;font-size:12px;color:#008000;left:876px;transform:scaleX(1.0656);transform-origin:0 0;">2016.10.07</span>
<span style="top:428px;font-size:12px;color:#008000;left:956px;">7</span>
<span style="top:428px;font-size:12px;color:#008000;left:986px;transform:scaleX(1.0500);transform-origin:0 0;">81.86</span>
<span style="top:428px;font-size:12px;color:#008000;left:1056px;transform:scaleX(1.0600);transform-origin:0 0;">0.2%</span>
<span style="top:440px;font-size:12px;color:#008000;left:876px;transform:scaleX(1.0656);transform-origin:0 0;">2016.10.06</span>
<span style="top:440px;font-size:12px;color:#008000;left:956px;">18</span>
<span style="top:440px;font-size:12px;color:#008000;left:986px;transform:scaleX(1.0500);transform-origin:0 0;">253.19</span>
<span style="top:440px;font-size:12px;color:#008000;left:1056px;transform:scaleX(1.0600);transform-origin:0 0;">0.5%</span>
<span style="top:452px;font-size:12px;color:#008000;left:876px;transform:scaleX(1.0656);transform-origin:0 0;">2016.10.05</span>
<span style="top:452px;font-size:12px;color:#008000;left:956px;">13</span>
<span style="top:452px;font-size:12px;color:#008000;left:986px;transform:scaleX(1.0500);transform-origin:0 0;">176.92</span>
<span style="top:452px;font-size:12px;color:#008000;left:1056px;transform:scaleX(1.0600);transform-origin:0 0;">0.4%</span>
<span style="top:464px;font-size:12px;color:#008000;left:876px;transform:scaleX(1.0656);transform-origin:0 0;">2016.10.04</span>
<span style="top:464px;font-size:12px;color:#008000;left:956px;">36</span>
<span style="top:464px;font-size:12px;color:#008000;left:986px;transform:scaleX(1.0500);transform-origin:0 0;">434.47</span>
<span style="top:464px;font-size:12px;color:#008000;left:1056px;transform:scaleX(1.0600);transform-origin:0 0;">0.9%</span>
<span style="top:476px;font-size:12px;color:#008000;left:876px;transform:scaleX(1.0656);transform-origin:0 0;">2016.10.03</span>
<span style="top:476px;font-size:12px;color:#008000;left:956px;">22</span>
<span style="top:476px;font-size:12px;color:#008000;left:986px;transform:scaleX(1.0500);transform-origin:0 0;">318.92</span>
<span style="top:476px;font-size:12px;color:#008000;left:1056px;transform:scaleX(1.0600);transform-origin:0 0;">0.6%</span>
<span style="top:488px;font-size:12px;color:#a8a8a8;left:876px;transform:scaleX(1.0656);transform-origin:0 0;">2016.09.30</span>
<span style="top:488px;font-size:12px;color:#a8a8a8;left:956px;">0</span>
<span style="top:488px;font-size:12px;color:#a8a8a8;left:986px;transform:scaleX(1.0500);transform-origin:0 0;">0.00</span>
<span style="top:488px;font-size:12px;color:#a8a8a8;left:1056px;transform:scaleX(1.0600);transform-origin:0 0;">0.0%</span>
<span style="top:500px;font-size:12px;color:#a8a8a8;left:876px;transform:scaleX(1.0656);transform-origin:0 0;">2016.09.29</span>
<span style="top:500px;font-size:12px;color:#a8a8a8;left:956px;">0</span>
<span style="top:500px;font-size:12px;color:#a8a8a8;left:986px;transform:scaleX(1.0500);transform-origin:0 0;">0.00</span>
<span style="top:500px;font-size:12px;color:#a8a8a8;left:1056px;transform:scaleX(1.0600);transform-origin:0 0;">0.0%</span>
<span style="top:512px;font-size:12px;color:#a8a8a8;left:876px;transform:scaleX(1.0656);transform-origin:0 0;">2016.09.28</span>
<span style="top:512px;font-size:12px;color:#a8a8a8;left:956px;">0</span>
<span style="top:512px;font-size:12px;color:#a8a8a8;left:986px;transform:scaleX(1.0500);transform-origin:0 0;">0.00</span>
<span style="top:512px;font-size:12px;color:#a8a8a8;left:1056px;transform:scaleX(1.0600);transform-origin:0 0;">0.0%</span>
<span style="top:524px;font-size:12px;color:#a8a8a8;left:876px;transform:scaleX(1.0656);transform-origin:0 0;">2016.09.27</span>
<span style="top:524px;font-size:12px;color:#a8a8a8;left:956px;">0</span>
<span style="top:524px;font-size:12px;color:#a8a8a8;left:986px;transform:scaleX(1.0500);transform-origin:0 0;">0.00</span>
<span style="top:524px;font-size:12px;color:#a8a8a8;left:1056px;transform:scaleX(1.0600);transform-origin:0 0;">0.0%</span>
<span style="top:536px;font-size:12px;color:#a8a8a8;left:876px;transform:scaleX(1.0656);transform-origin:0 0;">2016.09.26</span>
<span style="top:536px;font-size:12px;color:#a8a8a8;left:956px;">0</span>
<span style="top:536px;font-size:12px;color:#a8a8a8;left:986px;transform:scaleX(1.0500);transform-origin:0 0;">0.00</span>
<span style="top:536px;font-size:12px;color:#a8a8a8;left:1056px;transform:scaleX(1.0600);transform-origin:0 0;">0.0%</span>
<span style="top:548px;font-size:12px;color:#a8a8a8;left:876px;transform:scaleX(1.0656);transform-origin:0 0;">2016.09.23</span>
<span style="top:548px;font-size:12px;color:#a8a8a8;left:956px;">0</span>
<span style="top:548px;font-size:12px;color:#a8a8a8;left:986px;transform:scaleX(1.0500);transform-origin:0 0;">0.00</span>
<span style="top:548px;font-size:12px;color:#a8a8a8;left:1056px;transform:scaleX(1.0600);transform-origin:0 0;">0.0%</span>
<span style="top:560px;font-size:12px;color:#a8a8a8;left:876px;transform:scaleX(1.0656);transform-origin:0 0;">2016.09.22</span>
<span style="top:560px;font-size:12px;color:#a8a8a8;left:956px;">0</span>
<span style="top:560px;font-size:12px;color:#a8a8a8;left:986px;transform:scaleX(1.0500);transform-origin:0 0;">0.00</span>
<span style="top:560px;font-size:12px;color:#a8a8a8;left:1056px;transform:scaleX(1.0600);transform-origin:0 0;">0.0%</span>
<span style="top:572px;font-size:12px;color:#a8a8a8;left:876px;transform:scaleX(1.0656);transform-origin:0 0;">2016.09.21</span>
<span style="top:572px;font-size:12px;color:#a8a8a8;left:956px;">0</span>
<span style="top:572px;font-size:12px;color:#a8a8a8;left:986px;transform:scaleX(1.0500);transform-origin:0 0;">0.00</span>
<span style="top:572px;font-size:12px;color:#a8a8a8;left:1056px;transform:scaleX(1.0600);transform-origin:0 0;">0.0%</span>
<span style="top:584px;font-size:12px;color:#a8a8a8;left:876px;transform:scaleX(1.0656);transform-origin:0 0;">2016.09.20</span>
<span style="top:584px;font-size:12px;color:#a8a8a8;left:956px;">0</span>
<span style="top:584px;font-size:12px;color:#a8a8a8;left:986px;transform:scaleX(1.0500);transform-origin:0 0;">0.00</span>
<span style="top:584px;font-size:12px;color:#a8a8a8;left:1056px;transform:scaleX(1.0600);transform-origin:0 0;">0.0%</span>
<span style="top:596px;font-size:12px;color:#a8a8a8;left:876px;transform:scaleX(1.0656);transform-origin:0 0;">2016.09.19</span>
<span style="top:596px;font-size:12px;color:#a8a8a8;left:956px;">0</span>
<span style="top:596px;font-size:12px;color:#a8a8a8;left:986px;transform:scaleX(1.0500);transform-origin:0 0;">0.00</span>
<span style="top:596px;font-size:12px;color:#a8a8a8;left:1056px;transform:scaleX(1.0600);transform-origin:0 0;">0.0%</span>
<span style="top:608px;font-size:12px;color:#a8a8a8;left:876px;transform:scaleX(1.0656);transform-origin:0 0;">2016.09.16</span>
<span style="top:608px;font-size:12px;color:#a8a8a8;left:956px;">0</span>
<span style="top:608px;font-size:12px;color:#a8a8a8;left:986px;transform:scaleX(1.0500);transform-origin:0 0;">0.00</span>
<span style="top:608px;font-size:12px;color:#a8a8a8;left:1056px;transform:scaleX(1.0600);transform-origin:0 0;">0.0%</span>
<div style="left:196px;top:624px;width:1px;height:3px;background:#fff;"></div>
<span style="top:629px;font-size:9px;color:#fff;left:195px;">12 Sep 2016</span>
<div style="left:260px;top:624px;width:1px;height:3px;background:#fff;"></div>
<span style="top:629px;font-size:9px;color:#fff;left:259px;">14 Sep 06:00</span>
<div style="left:324px;top:624px;width:1px;height:3px;background:#fff;"></div>
<span style="top:629px;font-size:9px;color:#fff;left:323px;">15 Sep 14:00</span>
<div style="left:388px;top:624px;width:1px;height:3px;background:#fff;"></div>
<span style="top:629px;font-size:9px;color:#fff;left:387px;">16 Sep 22:00</span>
<div style="left:452px;top:624px;width:1px;height:3px;background:#fff;"></div>
<span style="top:629px;font-size:9px;color:#fff;left:451px;">20 Sep 06:00</span>
<div style="left:516px;top:624px;width:1px;height:3px;background:#fff;"></div>
<span style="top:629px;font-size:9px;color:#fff;left:515px;">21 Sep 14:00</span>
<div style="left:580px;top:624px;width:1px;height:3px;background:#fff;"></div>
<span style="top:629px;font-size:9px;color:#fff;left:579px;">22 Sep 22:00</span>
<div style="left:644px;top:624px;width:1px;height:3px;background:#fff;"></div>
<span style="top:629px;font-size:9px;color:#fff;left:643px;">26 Sep 06:00</span>
<div style="left:708px;top:624px;width:1px;height:3px;background:#fff;"></div>
<span style="top:629px;font-size:9px;color:#fff;left:707px;">27 Sep 14:00</span>
<div style="left:772px;top:624px;width:1px;height:3px;background:#fff;"></div>
<span style="top:629px;font-size:9px;color:#fff;left:771px;">28 Sep 22:00</span>
<div style="left:836px;top:624px;width:1px;height:3px;background:#fff;"></div>
<span style="top:629px;font-size:9px;color:#fff;left:835px;">30 Sep 06:00</span>
<div style="left:900px;top:624px;width:1px;height:3px;background:#fff;"></div>
<span style="top:629px;font-size:9px;color:#fff;left:899px;">3 Oct 14:00</span>
<div style="left:964px;top:624px;width:1px;height:3px;background:#fff;"></div>
<span style="top:629px;font-size:9px;color:#fff;left:963px;">4 Oct 22:00</span>
<div style="left:1028px;top:624px;width:1px;height:3px;background:#fff;"></div>
<span style="top:629px;font-size:9px;color:#fff;left:1027px;">6 Oct 06:00</span>
<div style="left:1092px;top:624px;width:1px;height:3px;background:#fff;"></div>
<span style="top:629px;font-size:9px;color:#fff;left:1091px;">7 Oct 14:00</span>
<div style="left:192px;top:644px;width:953px;height:1px;background:#fff;"></div>
<div style="left:192px;top:645px;width:953px;height:1px;background:#f0f0f0;"></div>
<div style="left:192px;top:646px;width:953px;height:1px;background:#000;"></div>
<span style="top:650px;font-size:12px;color:#727272;left:208px;transform:scaleX(0.8995);transform-origin:0 0;">EURGBP,H4</span>
<span style="top:650px;font-size:12px;color:#727272;left:291px;transform:scaleX(0.9174);transform-origin:0 0;">EURNZD,H4</span>
<span style="top:650px;font-size:12px;color:#727272;left:376px;transform:scaleX(0.9611);transform-origin:0 0;">AUDNZD,H4</span>
<span style="top:650px;font-size:12px;color:#727272;left:465px;transform:scaleX(0.9055);transform-origin:0 0;">GBPAUD,H1</span>
<span style="top:650px;font-size:12px;color:#727272;left:553px;transform:scaleX(0.9307);transform-origin:0 0;">USDCAD,M15</span>
<span style="top:650px;font-size:12px;color:#727272;left:648px;transform:scaleX(0.8795);transform-origin:0 0;">GBPUSD,H1</span>
<span style="top:650px;font-size:12px;color:#727272;left:732px;transform:scaleX(0.8795);transform-origin:0 0;">GBPUSD,H1</span>
<span style="top:650px;font-size:12px;color:#727272;left:816px;transform:scaleX(0.8795);transform-origin:0 0;">EURUSD,H1</span>
<span style="top:650px;font-size:12px;color:#727272;left:899px;transform:scaleX(0.9422);transform-origin:0 0;">USDCHF,M15</span>
<div style="left:280px;top:650px;width:1px;height:13px;background:#696969;"></div>
<div style="left:365px;top:650px;width:1px;height:13px;background:#696969;"></div>
<div style="left:453px;top:650px;width:1px;height:13px;background:#696969;"></div>
<div style="left:541px;top:650px;width:1px;height:13px;background:#696969;"></div>
<div style="left:637px;top:650px;width:1px;height:13px;background:#696969;"></div>
<div style="left:721px;top:650px;width:1px;height:13px;background:#696969;"></div>
<div style="left:805px;top:650px;width:1px;height:13px;background:#696969;"></div>
<div style="left:889px;top:650px;width:1px;height:13px;background:#696969;"></div>
<div style="left:981px;top:646px;width:88px;height:19px;background:#fff;border:1px solid #000;border-top:none;box-sizing:border-box;box-shadow:1px 1px 0 #808080"></div>
<span style="top:650px;font-size:12px;color:#000;left:993px;transform:scaleX(0.9083);transform-origin:0 0;">AUDUSD,H1</span>
<svg style="left:1113px;top:651px" width="5" height="8" viewBox="0 0 5 8"><path d="M4.5 0.5V7.5L0.5 4Z" fill="#000"/></svg>
<svg style="left:1132px;top:651px" width="5" height="8" viewBox="0 0 5 8"><path d="M0.5 0.5V7.5L4.5 4Z" fill="#a0a0a0"/></svg>
<div style="left:16px;top:670px;width:1128px;height:1px;background:#a0a0a0;"></div>
<div style="left:16px;top:671px;width:1128px;height:127px;background:#fff;"></div>
<div style="left:1px;top:684px;width:15px;height:113px;background:linear-gradient(180deg,#d9e5f4 0%,#b9cde8 100%);"></div>
<svg style="left:4px;top:672px" width="8" height="8" viewBox="0 0 8 8"><path d="M1.5 1.5L6.5 6.5M6.5 1.5L1.5 6.5" stroke="#000" stroke-width="1.6"/></svg>
<span style="left:3px;top:794px;font-size:11px;color:#000;transform:rotate(-90deg) scaleX(0.98);transform-origin:0 0;">Терминал</span>
<div style="left:16px;top:670px;width:1px;height:105px;background:#a0a0a0;"></div>
<div style="left:105px;top:671px;width:1px;height:24px;background:#e5e5e5;"></div>
<div style="left:228px;top:671px;width:1px;height:24px;background:#e5e5e5;"></div>
<div style="left:289px;top:671px;width:1px;height:24px;background:#e5e5e5;"></div>
<div style="left:337px;top:671px;width:1px;height:24px;background:#e5e5e5;"></div>
<div style="left:398px;top:671px;width:1px;height:24px;background:#e5e5e5;"></div>
<div style="left:466px;top:671px;width:1px;height:24px;background:#e5e5e5;"></div>
<div style="left:534px;top:671px;width:1px;height:24px;background:#e5e5e5;"></div>
<div style="left:602px;top:671px;width:1px;height:24px;background:#e5e5e5;"></div>
<div style="left:670px;top:671px;width:1px;height:24px;background:#e5e5e5;"></div>
<div style="left:738px;top:671px;width:1px;height:24px;background:#e5e5e5;"></div>
<div style="left:806px;top:671px;width:1px;height:24px;background:#e5e5e5;"></div>
<div style="left:909px;top:671px;width:1px;height:24px;background:#e5e5e5;"></div>
<div style="left:17px;top:695px;width:1108px;height:1px;background:#dcdcdc;"></div>
<span style="top:678px;font-size:12px;color:#000;left:23px;transform:scaleX(0.9420);transform-origin:0 0;">Ордер</span>
<svg style="left:69px;top:681px" width="5" height="7" viewBox="0 0 5 7"><path d="M0.5 6.5L4.5 0.5" stroke="#808080" stroke-width="1"/></svg>
<span style="top:678px;font-size:12px;color:#000;right:925px;transform:scaleX(0.9416);transform-origin:100% 0;">Время</span>
<span style="top:678px;font-size:12px;color:#000;right:864px;">Тип</span>
<span style="top:678px;font-size:12px;color:#000;right:815px;transform:scaleX(0.9606);transform-origin:100% 0;">Объ...</span>
<span style="top:678px;font-size:12px;color:#000;right:755px;transform:scaleX(0.9935);transform-origin:100% 0;">Символ</span>
<span style="top:678px;font-size:12px;color:#000;right:687px;transform:scaleX(0.9356);transform-origin:100% 0;">Цена</span>
<span style="top:678px;font-size:12px;color:#000;right:619px;transform:scaleX(0.9316);transform-origin:100% 0;">S / L</span>
<span style="top:678px;font-size:12px;color:#000;right:551px;transform:scaleX(0.9552);transform-origin:100% 0;">T / P</span>
<span style="top:678px;font-size:12px;color:#000;right:483px;transform:scaleX(0.9356);transform-origin:100% 0;">Цена</span>
<span style="top:678px;font-size:12px;color:#000;right:415px;transform:scaleX(1.0218);transform-origin:100% 0;">Комиссия</span>
<span style="top:678px;font-size:12px;color:#000;right:347px;transform:scaleX(0.9616);transform-origin:100% 0;">Своп</span>
<span style="top:678px;font-size:12px;color:#000;right:243px;transform:scaleX(0.9455);transform-origin:100% 0;">Прибыль</span>
<span style="top:678px;font-size:12px;color:#000;right:28px;transform:scaleX(1.0054);transform-origin:100% 0;">Комментарий</span>
<div style="left:17px;top:715px;width:1108px;height:1px;background:#dcdcdc;"></div>
<div style="left:104px;top:696px;width:1px;height:19px;background:#d0d0d0;"></div>
<div style="left:227px;top:696px;width:1px;height:19px;background:#d0d0d0;"></div>
<div style="left:288px;top:696px;width:1px;height:19px;background:#d0d0d0;"></div>
<div style="left:336px;top:696px;width:1px;height:19px;background:#d0d0d0;"></div>
<div style="left:397px;top:696px;width:1px;height:19px;background:#d0d0d0;"></div>
<div style="left:465px;top:696px;width:1px;height:19px;background:#d0d0d0;"></div>
<div style="left:533px;top:696px;width:1px;height:19px;background:#d0d0d0;"></div>
<div style="left:601px;top:696px;width:1px;height:19px;background:#d0d0d0;"></div>
<div style="left:669px;top:696px;width:1px;height:19px;background:#d0d0d0;"></div>
<div style="left:737px;top:696px;width:1px;height:19px;background:#d0d0d0;"></div>
<div style="left:805px;top:696px;width:1px;height:19px;background:#d0d0d0;"></div>
<div style="left:908px;top:696px;width:1px;height:19px;background:#d0d0d0;"></div>
<svg style="left:20px;top:698px" width="15" height="16" viewBox="0 0 15 16"><path d="M1.5 1.5H8.5L11.5 4.5V13.5H1.5Z" fill="#fff" stroke="#505050" stroke-width="1"/><path d="M8.5 1.5V4.5H11.5" fill="none" stroke="#505050"/><circle cx="10.5" cy="12" r="3.2" fill="#2f8fe8" stroke="#1b5fa8" stroke-width="0.8"/></svg>
<span style="top:699px;font-size:12px;color:#000;left:39px;transform:scaleX(0.8988);transform-origin:0 0;">508385136</span>
<span style="top:699px;font-size:12px;color:#000;right:923px;transform:scaleX(0.8900);transform-origin:100% 0;">2016.10.06 22:00:08</span>
<span style="top:699px;font-size:12px;color:#000;right:862px;transform:scaleX(0.9500);transform-origin:100% 0;">buy</span>
<span style="top:699px;font-size:12px;color:#000;right:813px;transform:scaleX(0.9500);transform-origin:100% 0;">0.06</span>
<span style="top:699px;font-size:12px;color:#000;right:753px;transform:scaleX(0.9500);transform-origin:100% 0;">gbpusd</span>
<span style="top:699px;font-size:12px;color:#000;right:685px;transform:scaleX(0.9500);transform-origin:100% 0;">1.2607</span>
<span style="top:699px;font-size:12px;color:#000;right:617px;transform:scaleX(0.9500);transform-origin:100% 0;">0.0000</span>
<span style="top:699px;font-size:12px;color:#000;right:548px;transform:scaleX(0.9500);transform-origin:100% 0;">1.2748</span>
<span style="top:699px;font-size:12px;color:#000;right:480px;transform:scaleX(0.9500);transform-origin:100% 0;">1.2449</span>
<span style="top:699px;font-size:12px;color:#000;right:412px;transform:scaleX(0.9500);transform-origin:100% 0;">0.00</span>
<span style="top:699px;font-size:12px;color:#000;right:344px;transform:scaleX(0.9500);transform-origin:100% 0;">0.00</span>
<span style="top:699px;font-size:12px;color:#000;right:261px;transform:scaleX(0.9500);transform-origin:100% 0;">-586.22</span>
<span style="top:699px;font-size:12px;color:#000;right:26px;transform:scaleX(0.9500);transform-origin:100% 0;">System 2: Basket# 5</span>
<svg style="left:895px;top:701px" width="8" height="8" viewBox="0 0 8 8"><path d="M1 1L7 7M7 1L1 7" stroke="#909090" stroke-width="1.6"/></svg>
<div style="left:17px;top:716px;width:1108px;height:19px;background:#f0f0f0;"></div>
<div style="left:17px;top:735px;width:1108px;height:1px;background:#dcdcdc;"></div>
<div style="left:104px;top:716px;width:1px;height:19px;background:#d0d0d0;"></div>
<div style="left:227px;top:716px;width:1px;height:19px;background:#d0d0d0;"></div>
<div style="left:288px;top:716px;width:1px;height:19px;background:#d0d0d0;"></div>
<div style="left:336px;top:716px;width:1px;height:19px;background:#d0d0d0;"></div>
<div style="left:397px;top:716px;width:1px;height:19px;background:#d0d0d0;"></div>
<div style="left:465px;top:716px;width:1px;height:19px;background:#d0d0d0;"></div>
<div style="left:533px;top:716px;width:1px;height:19px;background:#d0d0d0;"></div>
<div style="left:601px;top:716px;width:1px;height:19px;background:#d0d0d0;"></div>
<div style="left:669px;top:716px;width:1px;height:19px;background:#d0d0d0;"></div>
<div style="left:737px;top:716px;width:1px;height:19px;background:#d0d0d0;"></div>
<div style="left:805px;top:716px;width:1px;height:19px;background:#d0d0d0;"></div>
<div style="left:908px;top:716px;width:1px;height:19px;background:#d0d0d0;"></div>
<svg style="left:20px;top:718px" width="15" height="16" viewBox="0 0 15 16"><path d="M1.5 1.5H8.5L11.5 4.5V13.5H1.5Z" fill="#fff" stroke="#505050" stroke-width="1"/><path d="M8.5 1.5V4.5H11.5" fill="none" stroke="#505050"/><circle cx="10.5" cy="12" r="3.2" fill="#2f8fe8" stroke="#1b5fa8" stroke-width="0.8"/></svg>
<span style="top:719px;font-size:12px;color:#000;left:39px;transform:scaleX(0.8988);transform-origin:0 0;">508385138</span>
<span style="top:719px;font-size:12px;color:#000;right:923px;transform:scaleX(0.8900);transform-origin:100% 0;">2016.10.06 22:00:08</span>
<span style="top:719px;font-size:12px;color:#000;right:862px;transform:scaleX(0.9500);transform-origin:100% 0;">buy</span>
<span style="top:719px;font-size:12px;color:#000;right:813px;transform:scaleX(0.9500);transform-origin:100% 0;">0.06</span>
<span style="top:719px;font-size:12px;color:#000;right:753px;transform:scaleX(0.9500);transform-origin:100% 0;">gbpusd</span>
<span style="top:719px;font-size:12px;color:#000;right:685px;transform:scaleX(0.9500);transform-origin:100% 0;">1.2607</span>
<span style="top:719px;font-size:12px;color:#000;right:617px;transform:scaleX(0.9500);transform-origin:100% 0;">0.0000</span>
<span style="top:719px;font-size:12px;color:#000;right:548px;transform:scaleX(0.9500);transform-origin:100% 0;">1.2728</span>
<span style="top:719px;font-size:12px;color:#000;right:480px;transform:scaleX(0.9500);transform-origin:100% 0;">1.2449</span>
<span style="top:719px;font-size:12px;color:#000;right:412px;transform:scaleX(0.9500);transform-origin:100% 0;">0.00</span>
<span style="top:719px;font-size:12px;color:#000;right:344px;transform:scaleX(0.9500);transform-origin:100% 0;">0.00</span>
<span style="top:719px;font-size:12px;color:#000;right:261px;transform:scaleX(0.9500);transform-origin:100% 0;">-586.22</span>
<span style="top:719px;font-size:12px;color:#000;right:26px;transform:scaleX(0.9500);transform-origin:100% 0;">25 System 2: Basket# 4</span>
<svg style="left:895px;top:721px" width="8" height="8" viewBox="0 0 8 8"><path d="M1 1L7 7M7 1L1 7" stroke="#909090" stroke-width="1.6"/></svg>
<div style="left:17px;top:736px;width:1108px;height:19px;background:#c8c8c8;"></div>
<svg style="left:20px;top:738px" width="13" height="13" viewBox="0 0 13 13"><rect x="0.5" y="0.5" width="12" height="12" rx="1.5" fill="#fff" stroke="#707070"/><path d="M6.5 10.5L10 6.5H8V2.5H5V6.5H3Z" fill="#e8401c" stroke="#a02808" stroke-width="0.6"/></svg>
<span style="top:739px;font-size:12px;color:#000;font-weight:bold;left:39px;transform:scaleX(0.9657);transform-origin:0 0;">Баланс: 50 352.80 RUR</span>
<span style="top:739px;font-size:12px;color:#000;font-weight:bold;left:174px;transform:scaleX(0.9634);transform-origin:0 0;">Средства: 44 363.67</span>
<span style="top:739px;font-size:12px;color:#000;font-weight:bold;left:294px;transform:scaleX(0.9837);transform-origin:0 0;">Маржа: 378.60</span>
<span style="top:739px;font-size:12px;color:#000;font-weight:bold;left:383px;transform:scaleX(0.9686);transform-origin:0 0;">Свободная маржа: 43 985.07</span>
<span style="top:739px;font-size:12px;color:#000;font-weight:bold;left:552px;transform:scaleX(1.0036);transform-origin:0 0;">Уровень: 11717.70%</span>
<span style="top:739px;font-size:12px;color:#000;font-weight:bold;right:261px;transform:scaleX(1.0450);transform-origin:100% 0;">-5 989.13</span>
<div style="left:1125px;top:671px;width:18px;height:103px;background:#f0f0f0;"></div>
<svg style="left:1128px;top:677px" width="11" height="8" viewBox="0 0 11 8"><path d="M2.200 6L5.500 2.700L8.800 6" stroke="#555" stroke-width="1.900" fill="none"/></svg>
<svg style="left:1128px;top:761px" width="11" height="8" viewBox="0 0 11 8"><path d="M2.200 2L5.500 5.300L8.800 2" stroke="#555" stroke-width="1.900" fill="none"/></svg>
<div style="left:1126px;top:740px;width:15px;height:17px;background:#c8c8c8;"></div>
<div style="left:16px;top:774px;width:1130px;height:24px;background:#f0f0f0;"></div>
<div style="left:16px;top:774px;width:1126px;height:1px;background:#000;"></div>
<div style="left:19px;top:774px;width:71px;height:20px;background:#fff;border:1px solid #000;border-top:none;box-sizing:border-box;box-shadow:1px 1px 0 #808080"></div>
<span style="top:778px;font-size:12px;color:#000;left:29px;transform:scaleX(1.0171);transform-origin:0 0;">Торговля</span>
<span style="top:778px;font-size:12px;color:#727272;left:101px;transform:scaleX(0.9854);transform-origin:0 0;">Активы</span>
<span style="top:778px;font-size:12px;color:#727272;left:162px;transform:scaleX(0.9763);transform-origin:0 0;">История Счета</span>
<span style="top:778px;font-size:12px;color:#727272;left:264px;transform:scaleX(1.0118);transform-origin:0 0;">Новости</span>
<span style="top:778px;font-size:12px;color:#727272;left:343px;transform:scaleX(0.9711);transform-origin:0 0;">Алерты</span>
<span style="top:778px;font-size:12px;color:#727272;left:405px;transform:scaleX(0.9902);transform-origin:0 0;">Почта</span>
<span style="top:778px;font-size:12px;color:#727272;left:466px;transform:scaleX(0.9842);transform-origin:0 0;">Маркет</span>
<span style="top:778px;font-size:12px;color:#727272;left:539px;transform:scaleX(1.0064);transform-origin:0 0;">Сигналы</span>
<span style="top:778px;font-size:12px;color:#727272;left:608px;transform:scaleX(0.9808);transform-origin:0 0;">Библиотека</span>
<span style="top:778px;font-size:12px;color:#727272;left:693px;transform:scaleX(0.9680);transform-origin:0 0;">Эксперты</span>
<span style="top:778px;font-size:12px;color:#727272;left:765px;transform:scaleX(1.0046);transform-origin:0 0;">Журнал</span>
<div style="left:152px;top:778px;width:1px;height:13px;background:#696969;"></div>
<div style="left:254px;top:778px;width:1px;height:13px;background:#696969;"></div>
<div style="left:333px;top:778px;width:1px;height:13px;background:#696969;"></div>
<div style="left:395px;top:778px;width:1px;height:13px;background:#696969;"></div>
<div style="left:456px;top:778px;width:1px;height:13px;background:#696969;"></div>
<div style="left:529px;top:778px;width:1px;height:13px;background:#696969;"></div>
<div style="left:598px;top:778px;width:1px;height:13px;background:#696969;"></div>
<div style="left:683px;top:778px;width:1px;height:13px;background:#696969;"></div>
<div style="left:756px;top:778px;width:1px;height:13px;background:#696969;"></div>
<div style="left:820px;top:778px;width:1px;height:13px;background:#696969;"></div>
<span style="top:783px;font-size:9px;color:#e8141c;font-weight:bold;left:313px;">99</span>
<span style="top:783px;font-size:9px;color:#e8141c;font-weight:bold;left:441px;">2</span>
<span style="top:783px;font-size:9px;color:#e8141c;font-weight:bold;left:509px;">42</span>
<div style="left:1px;top:797px;width:1143px;height:1px;background:#fff;"></div>
<div style="left:1143px;top:671px;width:1px;height:127px;background:#fff;"></div>
<div style="left:1px;top:799px;width:1145px;height:1px;background:#a8a8a8;"></div>
<span style="top:807px;font-size:12px;color:#000;left:3px;transform:scaleX(0.9756);transform-origin:0 0;">Для вызова справки нажмите F1</span>
<div style="left:433px;top:804px;width:1px;height:17px;background:#a0a0a0;"></div>
<div style="left:549px;top:804px;width:1px;height:17px;background:#a0a0a0;"></div>
<div style="left:651px;top:804px;width:1px;height:17px;background:#a0a0a0;"></div>
<div style="left:722px;top:804px;width:1px;height:17px;background:#a0a0a0;"></div>
<div style="left:793px;top:804px;width:1px;height:17px;background:#a0a0a0;"></div>
<div style="left:861px;top:804px;width:1px;height:17px;background:#a0a0a0;"></div>
<div style="left:931px;top:804px;width:1px;height:17px;background:#a0a0a0;"></div>
<div style="left:997px;top:804px;width:1px;height:17px;background:#a0a0a0;"></div>
<span style="top:807px;font-size:12px;color:#000;left:439px;transform:scaleX(0.9729);transform-origin:0 0;">Default</span>
<span style="top:807px;font-size:12px;color:#000;left:1030px;transform:scaleX(0.9484);transform-origin:0 0;">4174/3 kb</span>
<div style="left:1003px;top:806px;width:2px;height:12px;background:#5a8f2a;"></div>
<div style="left:1003px;top:815px;width:2px;height:3px;background:#1c4a9a;"></div>
<div style="left:1006px;top:806px;width:2px;height:12px;background:#5a8f2a;"></div>
<div style="left:1006px;top:814px;width:2px;height:4px;background:#1c4a9a;"></div>
<div style="left:1009px;top:806px;width:2px;height:12px;background:#5a8f2a;"></div>
<div style="left:1009px;top:813px;width:2px;height:5px;background:#1c4a9a;"></div>
<div style="left:1012px;top:806px;width:2px;height:12px;background:#5a8f2a;"></div>
<div style="left:1012px;top:812px;width:2px;height:6px;background:#1c4a9a;"></div>
<div style="left:1015px;top:806px;width:2px;height:12px;background:#5a8f2a;"></div>
<div style="left:1015px;top:811px;width:2px;height:7px;background:#1c4a9a;"></div>
<div style="left:1018px;top:806px;width:2px;height:12px;background:#5a8f2a;"></div>
<div style="left:1018px;top:810px;width:2px;height:8px;background:#1c4a9a;"></div>
<div style="left:1021px;top:806px;width:2px;height:12px;background:#5a8f2a;"></div>
<div style="left:1021px;top:809px;width:2px;height:9px;background:#1c4a9a;"></div>
<div style="left:1024px;top:806px;width:2px;height:12px;background:#5a8f2a;"></div>
<div style="left:1024px;top:808px;width:2px;height:10px;background:#1c4a9a;"></div>
<svg style="left:1131px;top:808px" width="15" height="15" viewBox="0 0 15 15"><path d="M15 1L1 15M15 4L4 15M15 7L7 15M15 10L10 15M15 13L13 15" stroke="#a8a8a8" stroke-width="1"/></svg>
<div style="left:0px;top:0px;width:1147px;height:1px;background:#0c7ad8;"></div>
<div style="left:0px;top:823px;width:1147px;height:1px;background:#0c7ad8;"></div>
<div style="left:0px;top:0px;width:1px;height:824px;background:#0c7ad8;"></div>
<div style="left:1146px;top:0px;width:1px;height:824px;background:#0c7ad8;"></div>
</body></html>
